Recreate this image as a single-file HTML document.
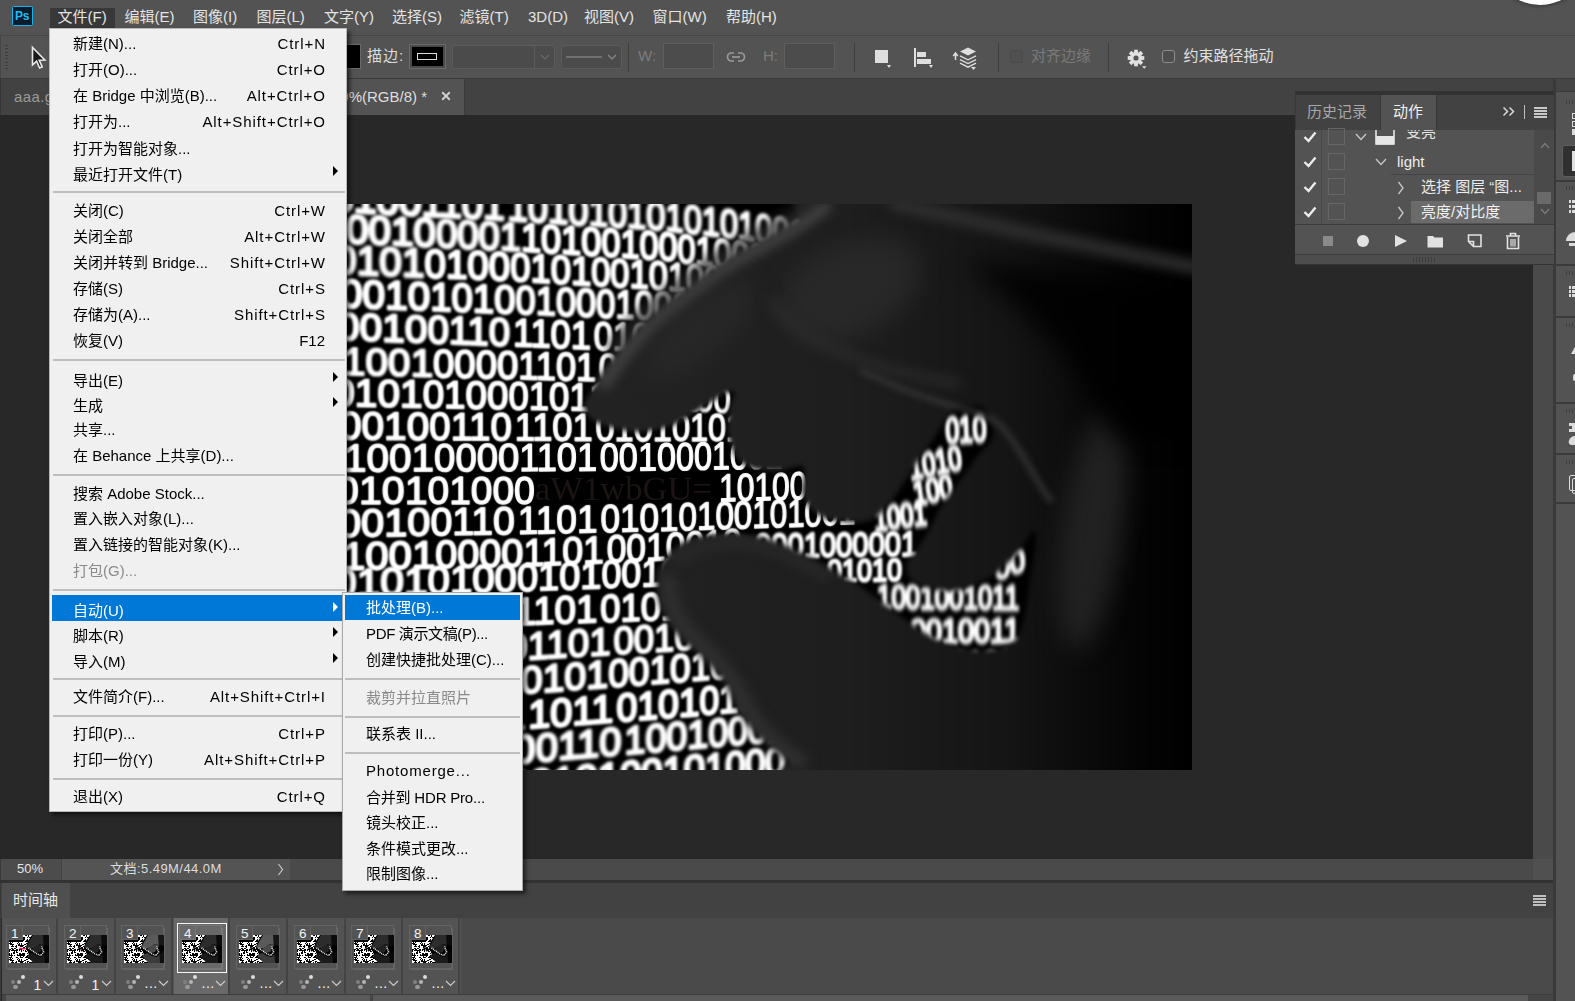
<!DOCTYPE html><html lang="zh-CN"><head><meta charset="utf-8"><title>Photoshop</title><style>
*{box-sizing:border-box;margin:0;padding:0}
html,body{width:1575px;height:1001px;overflow:hidden;background:#282828}
body{position:relative;font-family:"Liberation Sans","Noto Sans CJK SC",sans-serif;font-size:15px;color:#e2e2e2;-webkit-font-smoothing:antialiased}
.a{position:absolute}
.t{position:absolute;white-space:nowrap;line-height:20px;height:20px}
.mi{position:absolute;white-space:nowrap;line-height:22px;height:22px;font-size:15px;color:#000}
.sc{text-align:right}
.sep{position:absolute;height:2px;background:#bebebe;margin-top:-0.5px}
.arr{position:absolute;width:0;height:0;border-top:5px solid transparent;border-bottom:5px solid transparent;border-left:5px solid #000}
svg{position:absolute;overflow:visible}
</style></head><body>
<div class="a" style="left:0px;top:0px;width:1575px;height:35px;background:#535353;"></div>
<div class="a" style="left:0px;top:35px;width:1575px;height:1px;background:#464646;"></div>
<div class="a" style="left:0px;top:36px;width:1575px;height:42px;background:#535353;"></div>
<div class="a" style="left:0px;top:78px;width:1575px;height:1px;background:#3a3a3a;"></div>
<div class="a" style="left:0px;top:79px;width:1575px;height:36px;background:#424242;"></div>
<div class="a" style="left:0px;top:115px;width:1533px;height:744px;background:#282828;"></div>
<div class="a" style="left:12px;top:6px;width:21px;height:20px;background:#0a1c2b;border:1.5px solid #14b4f0;border-radius:1.5px"></div>
<div class="t" style="left:15px;top:6px;font-size:12px;font-weight:bold;color:#1fbdf8;letter-spacing:-0.3px">Ps</div>
<div class="a" style="left:50px;top:8px;width:65px;height:19.5px;background:#383838;border-radius:1px"></div>
<div class="t mbi" style="left:57.5px;top:7px;font-size:15px;color:#e4e4e4">文件(F)</div>
<div class="t mbi" style="left:124.5px;top:7px;font-size:15px;color:#e4e4e4">编辑(E)</div>
<div class="t mbi" style="left:193px;top:7px;font-size:15px;color:#e4e4e4">图像(I)</div>
<div class="t mbi" style="left:256.5px;top:7px;font-size:15px;color:#e4e4e4">图层(L)</div>
<div class="t mbi" style="left:324px;top:7px;font-size:15px;color:#e4e4e4">文字(Y)</div>
<div class="t mbi" style="left:392px;top:7px;font-size:15px;color:#e4e4e4">选择(S)</div>
<div class="t mbi" style="left:459.5px;top:7px;font-size:15px;color:#e4e4e4">滤镜(T)</div>
<div class="t mbi" style="left:528px;top:7px;font-size:15px;color:#e4e4e4">3D(D)</div>
<div class="t mbi" style="left:584px;top:7px;font-size:15px;color:#e4e4e4">视图(V)</div>
<div class="t mbi" style="left:652.5px;top:7px;font-size:15px;color:#e4e4e4">窗口(W)</div>
<div class="t mbi" style="left:726px;top:7px;font-size:15px;color:#e4e4e4">帮助(H)</div>
<div class="a" style="left:1491.5px;top:-91.8px;width:96.6px;height:96.6px;border-radius:50%;background:#fff;box-shadow:0 1px 4px rgba(0,0,0,0.35)"></div>
<div class="a" style="left:0px;top:36px;width:1px;height:42px;background:#454545;"></div>
<div class="a" style="left:5px;top:45.0px;width:3px;height:1px;background:#3d3d3d;"></div>
<div class="a" style="left:5px;top:48.35px;width:3px;height:1px;background:#3d3d3d;"></div>
<div class="a" style="left:5px;top:51.7px;width:3px;height:1px;background:#3d3d3d;"></div>
<div class="a" style="left:5px;top:55.05px;width:3px;height:1px;background:#3d3d3d;"></div>
<div class="a" style="left:5px;top:58.4px;width:3px;height:1px;background:#3d3d3d;"></div>
<div class="a" style="left:5px;top:61.75px;width:3px;height:1px;background:#3d3d3d;"></div>
<div class="a" style="left:5px;top:65.1px;width:3px;height:1px;background:#3d3d3d;"></div>
<div class="a" style="left:5px;top:68.45px;width:3px;height:1px;background:#3d3d3d;"></div>
<svg style="left:28px;top:46px" width="20" height="24" viewBox="0 0 20 24"><path d="M4.5 1.5 L4.5 19 L8.6 15.2 L11.6 22 L14.2 20.8 L11.2 14.2 L16.8 14 Z" fill="#1a1a1a" stroke="#e8e8e8" stroke-width="1.6" stroke-linejoin="miter"/></svg>
<div class="a" style="left:335px;top:44px;width:26px;height:25px;background:#000;border:1px solid #6a6a6a"></div>
<div class="t" style="left:367px;top:46px;font-size:15px;color:#dcdcdc;letter-spacing:1px">描边:</div>
<div class="a" style="left:409px;top:44px;width:37px;height:25px;background:#4a4a4a;border:1px solid #6a6a6a"></div>
<div class="a" style="left:412px;top:47px;width:31px;height:19px;background:#000;"></div>
<div class="a" style="left:417px;top:53px;width:20px;height:7px;background:#000;border:1.5px solid #dcdcdc"></div>
<div class="a" style="left:452px;top:45px;width:103px;height:24px;background:#4b4b4b;border:1px solid #5c5c5c;border-radius:3px"></div>
<div class="a" style="left:534px;top:46px;width:1px;height:22px;background:#5c5c5c;"></div>
<svg style="left:540px;top:54px" width="10" height="6"><path d="M1 1 L5 5 L9 1" fill="none" stroke="#6a6a6a" stroke-width="1.2"/></svg>
<div class="a" style="left:561px;top:45px;width:61px;height:24px;background:#4b4b4b;border:1px solid #5c5c5c;border-radius:3px"></div>
<div class="a" style="left:566px;top:55.5px;width:36px;height:2px;background:#707070;"></div>
<svg style="left:607px;top:54px" width="10" height="6"><path d="M1 1 L5 5 L9 1" fill="none" stroke="#8a8a8a" stroke-width="1.2"/></svg>
<div class="a" style="left:628px;top:43px;width:1px;height:29px;background:#3f3f3f;"></div>
<div class="t" style="left:638px;top:46px;font-size:15px;color:#7c7c7c;">W:</div>
<div class="a" style="left:663px;top:43px;width:51px;height:26px;background:#4c4c4c;border:1px solid #5e5e5e"></div>
<svg style="left:726px;top:50px" width="20" height="14" viewBox="0 0 20 14"><g fill="none" stroke="#9a9a9a" stroke-width="1.7"><path d="M8 3 H5.5 a4 4 0 0 0 0 8 H8"/><path d="M12 3 H14.5 a4 4 0 0 1 0 8 H12"/><path d="M6 7 H14"/></g></svg>
<div class="t" style="left:763px;top:46px;font-size:15px;color:#7c7c7c;">H:</div>
<div class="a" style="left:784px;top:43px;width:51px;height:26px;background:#4c4c4c;border:1px solid #5e5e5e"></div>
<div class="a" style="left:854px;top:43px;width:1px;height:29px;background:#3f3f3f;"></div>
<div class="a" style="left:875px;top:50px;width:13px;height:13px;background:#dedede;"></div>
<div class="a" style="left:887px;top:65px;border-left:2.5px solid transparent;border-right:2.5px solid transparent;border-top:3px solid #dedede"></div>
<div class="a" style="left:913.5px;top:48px;width:2px;height:19px;background:#dedede;"></div>
<div class="a" style="left:917px;top:52px;width:9px;height:5px;background:#dedede;"></div>
<div class="a" style="left:917px;top:59px;width:14px;height:5px;background:#dedede;"></div>
<div class="a" style="left:929px;top:65px;border-left:2.5px solid transparent;border-right:2.5px solid transparent;border-top:3px solid #dedede"></div>
<svg style="left:952px;top:46px" width="26" height="24" viewBox="0 0 26 24"><path d="M3.5 14 V8 M1.2 10 L3.5 7 L5.8 10" fill="none" stroke="#dedede" stroke-width="1.5"/><path d="M16 1.5 L24 5.5 L16 9.5 L8 5.5 Z" fill="#dedede"/><path d="M8 9.8 L16 13.8 L24 9.8 M8 13.6 L16 17.6 L24 13.6 M8 17.2 L16 21.2 L24 17.2" fill="none" stroke="#dedede" stroke-width="1.3"/><path d="M19 21 h5 l-2.5 3z" fill="#dedede"/></svg>
<div class="a" style="left:998px;top:43px;width:1px;height:29px;background:#3f3f3f;"></div>
<div class="a" style="left:1010px;top:50px;width:13px;height:13px;border:1px solid #4a4a4a;border-radius:3px;background:#505050"></div>
<div class="t" style="left:1031px;top:46px;font-size:15px;color:#7a7a7a;">对齐边缘</div>
<div class="a" style="left:1108px;top:43px;width:1px;height:29px;background:#3f3f3f;"></div>
<svg style="left:1126px;top:48px" width="20" height="20" viewBox="-10 -10 20 20"><g fill="#e0e0e0"><rect x="-1.9" y="-8.3" width="3.8" height="4" transform="rotate(0)"/><rect x="-1.9" y="-8.3" width="3.8" height="4" transform="rotate(45)"/><rect x="-1.9" y="-8.3" width="3.8" height="4" transform="rotate(90)"/><rect x="-1.9" y="-8.3" width="3.8" height="4" transform="rotate(135)"/><rect x="-1.9" y="-8.3" width="3.8" height="4" transform="rotate(180)"/><rect x="-1.9" y="-8.3" width="3.8" height="4" transform="rotate(225)"/><rect x="-1.9" y="-8.3" width="3.8" height="4" transform="rotate(270)"/><rect x="-1.9" y="-8.3" width="3.8" height="4" transform="rotate(315)"/><circle r="6"/></g><circle r="2.6" fill="#535353"/><path d="M6 8.2 h4.5 l-2.25 2.6z" fill="#e0e0e0"/></svg>
<div class="a" style="left:1162px;top:50px;width:13px;height:13px;border:1px solid #8c8c8c;border-radius:3px;background:#4d4d4d"></div>
<div class="t" style="left:1183.5px;top:46px;font-size:15px;color:#e0e0e0;">约束路径拖动</div>
<div class="a" style="left:0px;top:79px;width:1px;height:36px;background:#353535;"></div>
<div class="t" style="left:14px;top:87px;font-size:15px;color:#9a9a9a;letter-spacing:0.4px">aaa.gif</div>
<div class="a" style="left:52px;top:79px;width:413px;height:36px;background:#535353;"></div>
<div class="a" style="left:464px;top:79px;width:1px;height:36px;background:#3c3c3c;"></div>
<div class="t" style="left:127px;top:87px;font-size:15px;color:#dedede;text-align:right;width:300px;">123.gif @ 50%(RGB/8) *</div>
<svg style="left:441px;top:91px" width="10" height="10"><path d="M1.2 1.2 L8.8 8.8 M8.8 1.2 L1.2 8.8" stroke="#cfcfcf" stroke-width="2"/></svg>
<svg style="left:340px;top:204px;overflow:hidden" width="852" height="566" viewBox="340 204 852 566" font-family="Liberation Sans, sans-serif">
<defs>
<filter id="b0" color-interpolation-filters="sRGB" x="-5%" y="-30%" width="110%" height="160%"><feGaussianBlur stdDeviation="0.5"/></filter>
<filter id="b1" color-interpolation-filters="sRGB" x="-5%" y="-30%" width="110%" height="160%"><feGaussianBlur stdDeviation="0.9"/></filter>
<filter id="b2" color-interpolation-filters="sRGB" x="-5%" y="-30%" width="110%" height="160%"><feGaussianBlur stdDeviation="1.3"/></filter>
<filter id="b3" color-interpolation-filters="sRGB" x="-5%" y="-30%" width="110%" height="160%"><feGaussianBlur stdDeviation="1.9"/></filter>
<filter id="f4" color-interpolation-filters="sRGB" x="-5%" y="-5%" width="110%" height="110%"><feConvolveMatrix order="5" kernelMatrix="0.0000 0.0000 0.0000 0.0000 0.0000 0.0000 0.0016 0.0371 0.0016 0.0000 0.0000 0.0371 0.8450 0.0371 0.0000 0.0000 0.0016 0.0371 0.0016 0.0000 0.0000 0.0000 0.0000 0.0000 0.0000" divisor="1" edgeMode="none" preserveAlpha="false"/></filter>
<filter id="f5" color-interpolation-filters="sRGB" x="-5%" y="-5%" width="110%" height="110%"><feConvolveMatrix order="5" kernelMatrix="0.0000 0.0000 0.0002 0.0000 0.0000 0.0000 0.0113 0.0837 0.0113 0.0000 0.0002 0.0837 0.6187 0.0837 0.0002 0.0000 0.0113 0.0837 0.0113 0.0000 0.0000 0.0000 0.0002 0.0000 0.0000" divisor="1" edgeMode="none" preserveAlpha="false"/></filter>
<filter id="f6" color-interpolation-filters="sRGB" x="-5%" y="-5%" width="110%" height="110%"><feConvolveMatrix order="5" kernelMatrix="0.0000 0.0004 0.0017 0.0004 0.0000 0.0004 0.0274 0.1099 0.0274 0.0004 0.0017 0.1099 0.4407 0.1099 0.0017 0.0004 0.0274 0.1099 0.0274 0.0004 0.0000 0.0004 0.0017 0.0004 0.0000" divisor="1" edgeMode="none" preserveAlpha="false"/></filter>
<filter id="f7" color-interpolation-filters="sRGB" x="-5%" y="-5%" width="110%" height="110%"><feConvolveMatrix order="5" kernelMatrix="0.0001 0.0020 0.0055 0.0020 0.0001 0.0020 0.0422 0.1171 0.0422 0.0020 0.0055 0.1171 0.3248 0.1171 0.0055 0.0020 0.0422 0.1171 0.0422 0.0020 0.0001 0.0020 0.0055 0.0020 0.0001" divisor="1" edgeMode="none" preserveAlpha="false"/></filter>
<filter id="f8" color-interpolation-filters="sRGB" x="-5%" y="-5%" width="110%" height="110%"><feConvolveMatrix order="5" kernelMatrix="0.0005 0.0050 0.0109 0.0050 0.0005 0.0050 0.0522 0.1141 0.0522 0.0050 0.0109 0.1141 0.2491 0.1141 0.0109 0.0050 0.0522 0.1141 0.0522 0.0050 0.0005 0.0050 0.0109 0.0050 0.0005" divisor="1" edgeMode="none" preserveAlpha="false"/></filter>
<filter id="f9" color-interpolation-filters="sRGB" x="-5%" y="-5%" width="110%" height="110%"><feConvolveMatrix order="5" kernelMatrix="0.0014 0.0090 0.0168 0.0090 0.0014 0.0090 0.0576 0.1067 0.0576 0.0090 0.0168 0.1067 0.1979 0.1067 0.0168 0.0090 0.0576 0.1067 0.0576 0.0090 0.0014 0.0090 0.0168 0.0090 0.0014" divisor="1" edgeMode="none" preserveAlpha="false"/></filter>
<filter id="f10" color-interpolation-filters="sRGB" x="-5%" y="-5%" width="110%" height="110%"><feGaussianBlur stdDeviation="1.0"/></filter>
<filter id="f11" color-interpolation-filters="sRGB" x="-5%" y="-5%" width="110%" height="110%"><feGaussianBlur stdDeviation="1.1"/></filter>
<filter id="f12" color-interpolation-filters="sRGB" x="-5%" y="-5%" width="110%" height="110%"><feGaussianBlur stdDeviation="1.2"/></filter>
<filter id="f13" color-interpolation-filters="sRGB" x="-5%" y="-5%" width="110%" height="110%"><feGaussianBlur stdDeviation="1.3"/></filter>
<filter id="f14" color-interpolation-filters="sRGB" x="-5%" y="-5%" width="110%" height="110%"><feGaussianBlur stdDeviation="1.4"/></filter>
<filter id="f15" color-interpolation-filters="sRGB" x="-5%" y="-5%" width="110%" height="110%"><feGaussianBlur stdDeviation="1.5"/></filter>
<filter id="f16" color-interpolation-filters="sRGB" x="-5%" y="-5%" width="110%" height="110%"><feGaussianBlur stdDeviation="1.6"/></filter>
<filter id="f17" color-interpolation-filters="sRGB" x="-5%" y="-5%" width="110%" height="110%"><feGaussianBlur stdDeviation="1.7"/></filter>
<filter id="f19" color-interpolation-filters="sRGB" x="-5%" y="-5%" width="110%" height="110%"><feGaussianBlur stdDeviation="1.9"/></filter>
<filter id="hb" color-interpolation-filters="sRGB" x="-5%" y="-5%" width="110%" height="110%"><feGaussianBlur stdDeviation="2.6"/></filter>
<filter id="hb2" color-interpolation-filters="sRGB" x="-20%" y="-20%" width="140%" height="140%"><feGaussianBlur stdDeviation="6"/></filter>
<filter id="hb4" color-interpolation-filters="sRGB" x="-30%" y="-30%" width="160%" height="160%"><feGaussianBlur stdDeviation="12"/></filter>
<filter id="hb3" color-interpolation-filters="sRGB" x="-20%" y="-20%" width="140%" height="140%"><feGaussianBlur stdDeviation="3"/></filter>
<linearGradient id="hg" gradientUnits="userSpaceOnUse" x1="560" y1="0" x2="1192" y2="0"><stop offset="0" stop-color="#232323"/><stop offset="0.45" stop-color="#1e1e1e"/><stop offset="0.72" stop-color="#141414"/><stop offset="0.9" stop-color="#050505"/><stop offset="1" stop-color="#000"/></linearGradient>
<pattern id="spk" width="24" height="16" patternUnits="userSpaceOnUse"><rect width="24" height="16" fill="#fff"/><rect x="10" y="4" width="2" height="1" fill="#000"/><rect x="2" y="3" width="1" height="1" fill="#000"/><rect x="16" y="6" width="1" height="1" fill="#000"/><rect x="13" y="13" width="1" height="1" fill="#000"/><rect x="2" y="13" width="1" height="1" fill="#000"/><rect x="7" y="1" width="2" height="1" fill="#000"/><rect x="7" y="1" width="1" height="1" fill="#000"/><rect x="13" y="4" width="1" height="1" fill="#000"/><rect x="17" y="5" width="1" height="1" fill="#000"/><rect x="11" y="3" width="1" height="1" fill="#000"/><rect x="19" y="6" width="2" height="2" fill="#000"/><rect x="10" y="14" width="2" height="1" fill="#000"/><rect x="9" y="7" width="1" height="1" fill="#000"/><rect x="2" y="9" width="2" height="1" fill="#000"/><rect x="23" y="14" width="1" height="1" fill="#000"/><rect x="3" y="13" width="1" height="1" fill="#000"/><rect x="4" y="15" width="2" height="1" fill="#000"/><rect x="21" y="2" width="1" height="1" fill="#000"/><rect x="22" y="11" width="2" height="2" fill="#000"/><rect x="2" y="2" width="1" height="2" fill="#000"/><rect x="22" y="2" width="1" height="1" fill="#000"/><rect x="20" y="14" width="1" height="2" fill="#000"/><rect x="21" y="11" width="1" height="2" fill="#000"/><rect x="11" y="5" width="1" height="2" fill="#000"/><rect x="1" y="6" width="1" height="1" fill="#000"/><rect x="23" y="7" width="2" height="2" fill="#000"/><rect x="15" y="2" width="1" height="2" fill="#000"/><rect x="12" y="8" width="1" height="2" fill="#000"/><rect x="17" y="8" width="2" height="1" fill="#000"/><rect x="21" y="12" width="1" height="1" fill="#000"/><rect x="2" y="5" width="1" height="1" fill="#000"/><rect x="21" y="7" width="1" height="2" fill="#000"/><rect x="18" y="5" width="1" height="1" fill="#000"/><rect x="0" y="4" width="2" height="1" fill="#000"/><rect x="19" y="10" width="1" height="1" fill="#000"/><rect x="14" y="12" width="2" height="2" fill="#000"/><rect x="12" y="3" width="2" height="2" fill="#000"/><rect x="1" y="6" width="1" height="1" fill="#000"/><rect x="14" y="5" width="1" height="1" fill="#000"/><rect x="19" y="1" width="1" height="1" fill="#000"/><rect x="18" y="4" width="1" height="1" fill="#000"/><rect x="19" y="0" width="1" height="1" fill="#000"/><rect x="19" y="12" width="1" height="1" fill="#000"/><rect x="11" y="11" width="2" height="1" fill="#000"/><rect x="3" y="15" width="2" height="2" fill="#000"/><rect x="15" y="9" width="1" height="1" fill="#000"/><rect x="3" y="10" width="1" height="2" fill="#000"/><rect x="22" y="5" width="1" height="1" fill="#000"/><rect x="16" y="11" width="1" height="1" fill="#000"/><rect x="16" y="9" width="1" height="1" fill="#000"/><rect x="16" y="11" width="1" height="1" fill="#000"/><rect x="7" y="10" width="1" height="1" fill="#000"/><rect x="7" y="12" width="1" height="1" fill="#000"/><rect x="16" y="15" width="1" height="1" fill="#000"/><rect x="0" y="8" width="2" height="1" fill="#000"/><rect x="6" y="11" width="2" height="1" fill="#000"/><rect x="11" y="2" width="1" height="1" fill="#000"/><rect x="7" y="15" width="1" height="1" fill="#000"/><rect x="6" y="15" width="1" height="2" fill="#000"/><rect x="20" y="11" width="1" height="1" fill="#000"/><rect x="12" y="6" width="2" height="1" fill="#000"/><rect x="13" y="10" width="1" height="2" fill="#000"/><rect x="14" y="12" width="1" height="1" fill="#000"/><rect x="5" y="4" width="1" height="1" fill="#000"/><rect x="18" y="14" width="1" height="2" fill="#000"/><rect x="21" y="11" width="1" height="1" fill="#000"/><rect x="0" y="0" width="1" height="1" fill="#000"/><rect x="13" y="6" width="1" height="1" fill="#000"/><rect x="8" y="6" width="1" height="1" fill="#000"/><rect x="18" y="10" width="1" height="2" fill="#000"/><rect x="4" y="1" width="1" height="2" fill="#000"/><rect x="21" y="13" width="1" height="1" fill="#000"/><rect x="16" y="0" width="2" height="1" fill="#000"/><rect x="19" y="0" width="1" height="1" fill="#000"/><rect x="4" y="15" width="1" height="1" fill="#000"/><rect x="10" y="15" width="1" height="1" fill="#000"/><rect x="7" y="6" width="1" height="1" fill="#000"/><rect x="3" y="14" width="1" height="1" fill="#000"/><rect x="14" y="10" width="1" height="1" fill="#000"/><rect x="14" y="15" width="1" height="1" fill="#000"/><rect x="17" y="6" width="2" height="1" fill="#000"/><rect x="13" y="3" width="2" height="2" fill="#000"/><rect x="10" y="2" width="1" height="2" fill="#000"/><rect x="2" y="6" width="1" height="1" fill="#000"/><rect x="4" y="11" width="1" height="1" fill="#000"/><rect x="4" y="14" width="1" height="1" fill="#000"/><rect x="12" y="15" width="1" height="1" fill="#000"/><rect x="5" y="13" width="2" height="1" fill="#000"/><rect x="13" y="6" width="1" height="1" fill="#000"/><rect x="2" y="11" width="1" height="1" fill="#000"/><rect x="17" y="14" width="2" height="1" fill="#000"/><rect x="12" y="10" width="1" height="1" fill="#000"/><rect x="3" y="7" width="1" height="1" fill="#000"/><rect x="8" y="8" width="1" height="1" fill="#000"/><rect x="8" y="4" width="2" height="1" fill="#000"/><rect x="12" y="4" width="2" height="1" fill="#000"/><rect x="2" y="8" width="1" height="1" fill="#000"/><rect x="13" y="2" width="1" height="1" fill="#000"/><rect x="20" y="2" width="1" height="1" fill="#000"/><rect x="19" y="7" width="1" height="1" fill="#000"/><rect x="3" y="14" width="1" height="1" fill="#000"/><rect x="17" y="13" width="1" height="1" fill="#000"/><rect x="1" y="7" width="1" height="1" fill="#000"/><rect x="8" y="1" width="1" height="1" fill="#000"/><rect x="9" y="9" width="1" height="1" fill="#000"/><rect x="14" y="5" width="1" height="1" fill="#000"/><rect x="0" y="8" width="1" height="1" fill="#000"/><rect x="0" y="6" width="2" height="1" fill="#000"/><rect x="14" y="3" width="2" height="2" fill="#000"/><rect x="17" y="12" width="1" height="1" fill="#000"/><rect x="7" y="10" width="1" height="1" fill="#000"/><rect x="12" y="11" width="1" height="1" fill="#000"/><rect x="0" y="2" width="1" height="2" fill="#000"/><rect x="5" y="1" width="1" height="2" fill="#000"/><rect x="16" y="9" width="1" height="1" fill="#000"/><rect x="1" y="14" width="1" height="1" fill="#000"/><rect x="8" y="14" width="1" height="1" fill="#000"/><rect x="11" y="10" width="1" height="1" fill="#000"/><rect x="1" y="9" width="1" height="1" fill="#000"/><rect x="5" y="0" width="1" height="2" fill="#000"/><rect x="2" y="15" width="1" height="1" fill="#000"/><rect x="7" y="0" width="1" height="1" fill="#000"/><rect x="2" y="4" width="2" height="1" fill="#000"/><rect x="12" y="0" width="1" height="1" fill="#000"/><rect x="20" y="7" width="1" height="1" fill="#000"/><rect x="21" y="12" width="1" height="2" fill="#000"/><rect x="4" y="9" width="1" height="1" fill="#000"/><rect x="22" y="13" width="1" height="1" fill="#000"/><rect x="21" y="7" width="1" height="1" fill="#000"/><rect x="1" y="4" width="1" height="1" fill="#000"/><rect x="12" y="14" width="1" height="1" fill="#000"/><rect x="20" y="7" width="2" height="1" fill="#000"/><rect x="0" y="14" width="1" height="1" fill="#000"/><rect x="21" y="2" width="2" height="1" fill="#000"/><rect x="2" y="8" width="1" height="1" fill="#000"/><rect x="7" y="14" width="2" height="2" fill="#000"/><rect x="2" y="15" width="1" height="1" fill="#000"/><rect x="19" y="6" width="1" height="1" fill="#000"/><rect x="10" y="8" width="1" height="1" fill="#000"/><rect x="0" y="15" width="1" height="2" fill="#000"/><rect x="8" y="3" width="1" height="2" fill="#000"/><rect x="9" y="9" width="2" height="2" fill="#000"/><rect x="14" y="3" width="1" height="1" fill="#000"/><rect x="2" y="15" width="1" height="1" fill="#000"/><rect x="14" y="2" width="2" height="1" fill="#000"/><rect x="12" y="6" width="1" height="1" fill="#000"/><rect x="18" y="2" width="1" height="1" fill="#000"/><rect x="11" y="4" width="1" height="1" fill="#000"/><rect x="22" y="11" width="1" height="2" fill="#000"/><rect x="15" y="12" width="1" height="1" fill="#000"/></pattern>
</defs>
<rect x="340" y="204" width="852" height="566" fill="#000"/>
<g filter="url(#f4)" fill="#fff" stroke="#fff" stroke-width="1.3" stroke-linejoin="round">
<text font-size="39" transform="matrix(0.929 -0.0034 0 1 519.2 471.0)">1101</text>
<text font-size="39" transform="matrix(0.878 -0.0032 0 1 599.8 470.7)">0010</text>
<text font-size="39" transform="matrix(0.831 -0.0156 0 1 676.0 470.2)">0010</text>
<text font-size="39" transform="matrix(0.796 -0.0149 0 1 748.1 468.8)">01</text>
<text font-size="39" transform="matrix(0.963 0.0000 0 1 514.1 504.0)">0</text>
<text font-size="39" transform="matrix(0.815 -0.0185 0 1 719.0 501.4)">1010</text>
<text font-size="39" transform="matrix(0.781 -0.0234 0 1 789.7 499.6)">01</text>
</g>
<g filter="url(#f5)" fill="#fff" stroke="#fff" stroke-width="1.45" stroke-linejoin="round">
<text font-size="39" transform="matrix(0.982 -0.0025 0 1 434.1 471.2)">0000</text>
<text font-size="39" transform="matrix(0.998 0.0000 0 1 427.5 504.0)">0100</text>
<text font-size="39" transform="matrix(0.952 -0.0209 0 1 517.8 534.1)">1101</text>
<text font-size="39" transform="matrix(0.900 -0.0197 0 1 600.4 532.3)">0101</text>
<text font-size="39" transform="matrix(0.851 -0.0270 0 1 678.5 530.4)">0100</text>
<text font-size="39" transform="matrix(0.804 -0.0255 0 1 752.3 528.1)">1010</text>
<text font-size="39" transform="matrix(0.770 -0.0412 0 1 822.1 525.4)">01</text>
</g>
<g filter="url(#f6)" fill="#fff" stroke="#fff" stroke-width="1.6" stroke-linejoin="round">
<text font-size="39" transform="matrix(0.931 0.0040 0 1 514.7 440.4)">1101</text>
<text font-size="39" transform="matrix(0.881 0.0038 0 1 595.5 440.8)">0101</text>
<text font-size="39" transform="matrix(0.833 0.0000 0 1 671.9 441.0)">0101</text>
<text font-size="39" transform="matrix(0.804 0.0000 0 1 744.1 441.0)">0</text>
<text font-size="39" transform="matrix(1.038 -0.0027 0 1 344.0 471.5)">1001</text>
<text font-size="39" transform="matrix(1.055 0.0000 0 1 336.0 504.0)">0101</text>
<text font-size="39" transform="matrix(1.007 -0.0157 0 1 430.4 535.4)">0110</text>
<text font-size="39" transform="matrix(0.907 -0.0397 0 1 606.7 562.8)">0010</text>
<text font-size="39" transform="matrix(0.863 -0.0503 0 1 685.4 559.0)">010</text>
</g>
<g filter="url(#f7)" fill="#fff" stroke="#fff" stroke-width="1.75" stroke-linejoin="round">
<text font-size="39" transform="matrix(0.935 0.0164 0 1 508.4 409.2)">0101</text>
<text font-size="39" transform="matrix(0.884 0.0032 0 1 589.5 410.5)">1001</text>
<text font-size="39" transform="matrix(0.848 0.0030 0 1 666.3 410.8)">00</text>
<text font-size="39" transform="matrix(0.984 0.0076 0 1 429.3 439.8)">0110</text>
<text font-size="39" transform="matrix(0.960 -0.0421 0 1 523.4 566.5)">1101</text>
<text font-size="39" transform="matrix(0.920 -0.0336 0 1 601.4 588.1)">0010</text>
<text font-size="39" transform="matrix(0.875 -0.0437 0 1 681.2 584.9)">101</text>
</g>
<g filter="url(#f8)" fill="#fff" stroke="#fff" stroke-width="1.9" stroke-linejoin="round">
<text font-size="39.5" transform="matrix(0.917 0.0274 0 1 518.3 378.9)">1101</text>
<text font-size="39.5" transform="matrix(0.867 0.0158 0 1 598.8 381.2)">0010</text>
<text font-size="39.5" transform="matrix(0.832 0.0151 0 1 675.1 382.5)">01</text>
<text font-size="39" transform="matrix(0.988 0.0179 0 1 422.7 407.7)">0100</text>
<text font-size="39" transform="matrix(1.040 0.0081 0 1 339.0 439.1)">0010</text>
<text font-size="39" transform="matrix(1.065 -0.0166 0 1 338.0 536.9)">0010</text>
<text font-size="39" transform="matrix(1.016 -0.0184 0 1 435.2 568.1)">0000</text>
<text font-size="39" transform="matrix(0.973 -0.0355 0 1 517.0 591.2)">0101</text>
</g>
<g filter="url(#f9)" fill="#fff" stroke="#fff" stroke-width="2.05" stroke-linejoin="round">
<text font-size="39.5" transform="matrix(0.920 0.0380 0 1 512.9 346.1)">1101</text>
<text font-size="39.5" transform="matrix(0.871 0.0272 0 1 593.8 349.4)">0100</text>
<text font-size="39.5" transform="matrix(0.829 0.0259 0 1 670.3 352.1)">101</text>
<text font-size="39.5" transform="matrix(0.969 0.0226 0 1 433.1 376.9)">0000</text>
<text font-size="39" transform="matrix(1.045 0.0189 0 1 332.0 406.0)">0101</text>
<text font-size="39" transform="matrix(1.075 -0.0195 0 1 342.0 569.8)">1001</text>
<text font-size="39" transform="matrix(1.030 -0.0320 0 1 427.6 594.0)">0100</text>
<text font-size="39" transform="matrix(0.987 -0.0360 0 1 514.6 625.3)">1101</text>
<text font-size="39" transform="matrix(0.933 -0.0340 0 1 600.3 622.2)">0101</text>
<text font-size="39" transform="matrix(0.881 -0.0441 0 1 681.2 618.9)">0100</text>
</g>
<g filter="url(#f10)" fill="#fff" stroke="#fff" stroke-width="2.2" stroke-linejoin="round">
<text font-size="40" transform="matrix(0.812 0.0406 0 1 672.7 320.6)">0100</text>
<text font-size="39.5" transform="matrix(1.025 0.0239 0 1 343.0 374.8)">1001</text>
<text font-size="39" transform="matrix(1.090 -0.0339 0 1 333.0 596.9)">0101</text>
<text font-size="39" transform="matrix(1.045 -0.0379 0 1 424.0 628.6)">0110</text>
<text font-size="39" transform="matrix(0.992 -0.0615 0 1 527.5 659.7)">1101</text>
<text font-size="39" transform="matrix(0.936 -0.0581 0 1 613.5 654.4)">0010</text>
<text font-size="39" transform="matrix(0.883 -0.0663 0 1 694.7 648.9)">0100</text>
</g>
<g filter="url(#f11)" fill="#fff" stroke="#fff" stroke-width="2.35" stroke-linejoin="round">
<text font-size="40" transform="matrix(0.776 0.0660 0 1 740.4 296.3)">001</text>
<text font-size="40" transform="matrix(0.907 0.0397 0 1 515.6 313.7)">0100</text>
<text font-size="40" transform="matrix(0.858 0.0376 0 1 596.3 317.2)">0100</text>
<text font-size="39.5" transform="matrix(0.973 0.0353 0 1 427.4 343.0)">0110</text>
<text font-size="39" transform="matrix(1.106 -0.0401 0 1 328.0 632.1)">1010</text>
<text font-size="39" transform="matrix(1.050 -0.0435 0 1 436.4 663.6)">1000</text>
<text font-size="39.5" transform="matrix(0.939 -0.0720 0 1 608.2 687.5)">0010</text>
<text font-size="39.5" transform="matrix(0.886 -0.0720 0 1 690.7 681.0)">1001</text>
</g>
<g filter="url(#f12)" fill="#fff" stroke="#fff" stroke-width="2.5" stroke-linejoin="round">
<text font-size="40" transform="matrix(0.765 0.1052 0 1 749.4 271.0)">0100</text>
<text font-size="40" transform="matrix(0.910 0.0565 0 1 510.2 280.5)">0101</text>
<text font-size="40" transform="matrix(0.861 0.0534 0 1 591.2 285.2)">0010</text>
<text font-size="40" transform="matrix(0.815 0.0692 0 1 667.9 290.2)">1001</text>
<text font-size="40" transform="matrix(0.959 0.0348 0 1 430.2 310.6)">1010</text>
<text font-size="39.5" transform="matrix(1.029 0.0373 0 1 337.0 339.8)">0010</text>
<text font-size="39.5" transform="matrix(0.995 -0.0763 0 1 520.7 694.1)">0101</text>
</g>
<g filter="url(#f13)" fill="#fff" stroke="#fff" stroke-width="2.65" stroke-linejoin="round">
<text font-size="40" transform="matrix(0.740 0.1163 0 1 806.8 248.4)">01</text>
<text font-size="40" transform="matrix(0.904 0.0594 0 1 520.9 250.9)">1010</text>
<text font-size="40" transform="matrix(0.855 0.0562 0 1 601.4 256.1)">0100</text>
<text font-size="40" transform="matrix(0.809 0.0944 0 1 677.5 262.0)">0100</text>
<text font-size="40" transform="matrix(0.962 0.0374 0 1 424.5 277.2)">0100</text>
<text font-size="40" transform="matrix(1.014 0.0368 0 1 340.0 307.4)">0010</text>
<text font-size="39" transform="matrix(1.111 -0.0461 0 1 340.0 667.6)">0100</text>
<text font-size="39.5" transform="matrix(1.054 -0.0491 0 1 428.1 698.4)">0100</text>
<text font-size="39.5" transform="matrix(1.003 -0.0769 0 1 528.2 728.6)">1011</text>
<text font-size="39.5" transform="matrix(0.946 -0.0725 0 1 616.4 721.8)">0101</text>
<text font-size="39.5" transform="matrix(0.893 -0.0759 0 1 699.5 715.1)">0101</text>
</g>
<g filter="url(#f14)" fill="#fff" stroke="#fff" stroke-width="2.8" stroke-linejoin="round">
<text font-size="40" transform="matrix(0.863 0.0567 0 1 588.7 225.3)">1010</text>
<text font-size="40" transform="matrix(0.816 0.0898 0 1 665.5 230.6)">1010</text>
<text font-size="40" transform="matrix(0.772 0.1213 0 1 738.1 238.6)">1001</text>
<text font-size="40" transform="matrix(0.956 0.0446 0 1 435.9 246.9)">0001</text>
<text font-size="40" transform="matrix(1.017 0.0395 0 1 334.0 273.7)">0101</text>
<text font-size="39.5" transform="matrix(1.116 -0.0520 0 1 330.0 703.0)">0101</text>
<text font-size="39.5" transform="matrix(1.062 -0.0550 0 1 434.9 733.6)">1101</text>
<text font-size="39.5" transform="matrix(1.010 -0.0848 0 1 535.7 761.9)">0110</text>
<text font-size="39.5" transform="matrix(0.953 -0.0851 0 1 624.5 754.5)">1001</text>
<text font-size="39.5" transform="matrix(0.899 -0.0803 0 1 708.2 747.2)">0001</text>
<text font-size="39.5" transform="matrix(0.848 -0.0757 0 1 787.2 740.1)">0010</text>
</g>
<g filter="url(#f15)" fill="#fff" stroke="#fff" stroke-width="2.95" stroke-linejoin="round">
<text font-size="40" transform="matrix(0.912 0.0599 0 1 507.5 220.2)">1010</text>
<text font-size="39.5" transform="matrix(0.913 -0.0860 0 1 705.1 781.8)">1000</text>
<text font-size="39.5" transform="matrix(0.861 -0.0810 0 1 785.4 774.2)">1100</text>
</g>
<g filter="url(#f16)" fill="#fff" stroke="#fff" stroke-width="3.1" stroke-linejoin="round">
<text font-size="40" transform="matrix(0.964 0.0500 0 1 421.7 215.8)">1101</text>
<text font-size="40" transform="matrix(1.010 0.0471 0 1 346.0 242.7)">0010</text>
<text font-size="39.5" transform="matrix(1.125 -0.0583 0 1 336.0 738.7)">0100</text>
<text font-size="39.5" transform="matrix(1.070 -0.0610 0 1 441.6 767.6)">0100</text>
<text font-size="39.5" transform="matrix(1.027 -0.0899 0 1 529.8 797.4)">0101</text>
<text font-size="39.5" transform="matrix(0.968 -0.0911 0 1 620.0 789.5)">0010</text>
</g>
<g filter="url(#f17)" fill="#fff" stroke="#fff" stroke-width="3.25" stroke-linejoin="round">
<text font-size="40" transform="matrix(1.019 0.0528 0 1 331.0 211.1)">0100</text>
<text font-size="39.5" transform="matrix(1.134 -0.0646 0 1 342.0 773.3)">0010</text>
<text font-size="39.5" transform="matrix(1.087 -0.0620 0 1 434.2 803.1)">0100</text>
</g>
<g filter="url(#f19)" fill="#fff" stroke="#fff" stroke-width="3.55" stroke-linejoin="round">
<text font-size="39.5" transform="matrix(1.152 -0.0656 0 1 333.0 808.8)">0101</text>
</g>
<text font-size="37" fill="#fff" stroke="#fff" stroke-width="1.6" stroke-linejoin="round" filter="url(#b1)" transform="matrix(0.848 0.059 -0.000 1.000 696 411)">00</text>
<text font-size="36" fill="#fff" stroke="#fff" stroke-width="2.4" stroke-linejoin="round" filter="url(#b2)" transform="matrix(0.810 -0.011 -0.000 1.000 755 558)">0001000001</text>
<text font-size="31" fill="#fff" stroke="#fff" stroke-width="2.6" stroke-linejoin="round" filter="url(#b2)" transform="matrix(0.870 -0.015 -0.000 1.000 827 582)">01010</text>
<text font-size="36" fill="#fff" stroke="#fff" stroke-width="3.2" stroke-linejoin="round" filter="url(#b3)" transform="matrix(0.720 0.004 -0.000 1.000 877 609)">1001001011</text>
<text font-size="36" fill="#fff" stroke="#fff" stroke-width="3.2" stroke-linejoin="round" filter="url(#b3)" transform="matrix(0.800 -0.007 -0.000 1.000 910 643.5)">0010011</text>
<text font-size="36" fill="#fff" stroke="#fff" stroke-width="3.0" stroke-linejoin="round" filter="url(#b3)" transform="matrix(0.800 -0.028 -0.000 1.000 935 678)">10101</text>
<text font-size="34" fill="#fff" stroke="#fff" stroke-width="3.0" stroke-linejoin="round" filter="url(#b3)" transform="matrix(0.799 -0.291 0.105 0.995 996 581)">00</text>
<text font-size="37" fill="#fff" stroke="#fff" stroke-width="3.6" stroke-linejoin="round" filter="url(#b3)" transform="matrix(0.659 -0.035 0.035 0.999 946 443.5)">010</text>
<text font-size="35" fill="#fff" stroke="#fff" stroke-width="3.6" stroke-linejoin="round" filter="url(#b3)" transform="matrix(0.665 -0.141 0.139 0.990 911 480)">1010</text>
<text font-size="35" fill="#fff" stroke="#fff" stroke-width="3.6" stroke-linejoin="round" filter="url(#b3)" transform="matrix(0.665 -0.141 0.139 0.990 915 506)">100</text>
<text font-size="35" fill="#fff" stroke="#fff" stroke-width="3.6" stroke-linejoin="round" filter="url(#b3)" transform="matrix(0.674 -0.089 0.087 0.996 875 531.5)">1001</text>
<text x="535" y="500" font-size="33" font-family="Liberation Serif, serif" fill="#1c1313" textLength="177" lengthAdjust="spacingAndGlyphs">aW1wbGU=</text>
<path d="M832.0 194.0 C764.8 198.0 808.5 212.5 797.0 220.0 C785.5 227.5 774.2 232.8 763.0 239.0 C751.8 245.2 741.8 249.5 730.0 257.0 C718.2 264.5 705.7 273.8 692.0 284.0 C678.3 294.2 661.0 305.8 648.0 318.0 C635.0 330.2 623.0 345.7 614.0 357.0 C605.0 368.3 599.0 378.0 594.0 386.0 C589.0 394.0 585.0 400.2 584.0 405.0 C583.0 409.8 585.3 411.8 588.0 415.0 C590.7 418.2 592.0 421.2 600.0 424.0 C608.0 426.8 623.7 431.8 636.0 432.0 C648.3 432.2 663.0 429.0 674.0 425.0 C685.0 421.0 692.2 413.7 702.0 408.0 C711.8 402.3 728.5 390.7 733.0 391.0 C737.5 391.3 729.8 403.2 729.0 410.0 C728.2 416.8 727.0 424.5 728.0 432.0 C729.0 439.5 731.2 449.0 735.0 455.0 C738.8 461.0 743.5 465.3 751.0 468.0 C758.5 470.7 771.3 471.2 780.0 471.0 C788.7 470.8 799.2 462.8 803.0 467.0 C806.8 471.2 800.2 487.8 803.0 496.0 C805.8 504.2 812.7 511.7 820.0 516.0 C827.3 520.3 838.5 521.3 847.0 522.0 C855.5 522.7 864.2 522.8 871.0 520.0 C877.8 517.2 882.7 511.0 888.0 505.0 C893.3 499.0 898.0 491.3 903.0 484.0 C908.0 476.7 912.7 468.8 918.0 461.0 C923.3 453.2 929.3 445.3 935.0 437.0 C940.7 428.7 946.5 416.3 952.0 411.0 C957.5 405.7 962.3 405.2 968.0 405.0 C973.7 404.8 981.8 404.8 986.0 410.0 C990.2 415.2 994.2 428.7 993.0 436.0 C991.8 443.3 984.3 446.8 979.0 454.0 C973.7 461.2 967.2 470.5 961.0 479.0 C954.8 487.5 947.3 496.5 942.0 505.0 C936.7 513.5 933.3 522.3 929.0 530.0 C924.7 537.7 919.7 545.5 916.0 551.0 C912.3 556.5 908.2 558.7 907.0 563.0 C905.8 567.3 906.5 573.2 909.0 577.0 C911.5 580.8 914.7 583.7 922.0 586.0 C929.3 588.3 942.8 591.8 953.0 591.0 C963.2 590.2 974.5 585.0 983.0 581.0 C991.5 577.0 997.5 572.7 1004.0 567.0 C1010.5 561.3 1017.0 553.2 1022.0 547.0 C1027.0 540.8 1031.8 529.8 1034.0 530.0 C1036.2 530.2 1035.7 539.5 1035.0 548.0 C1034.3 556.5 1031.8 569.3 1030.0 581.0 C1028.2 592.7 1026.8 607.8 1024.0 618.0 C1021.2 628.2 1019.8 636.7 1013.0 642.0 C1006.2 647.3 994.8 650.0 983.0 650.0 C971.2 650.0 955.5 647.5 942.0 642.0 C928.5 636.5 915.5 626.2 902.0 617.0 C888.5 607.8 874.7 596.0 861.0 587.0 C847.3 578.0 833.5 570.2 820.0 563.0 C806.5 555.8 791.3 548.5 780.0 544.0 C768.7 539.5 760.2 537.8 752.0 536.0 C743.8 534.2 741.3 532.5 731.0 533.0 C720.7 533.5 700.8 535.0 690.0 539.0 C679.2 543.0 671.5 551.0 666.0 557.0 C660.5 563.0 658.0 567.2 657.0 575.0 C656.0 582.8 657.0 594.7 660.0 604.0 C663.0 613.3 667.5 622.0 675.0 631.0 C682.5 640.0 696.5 649.5 705.0 658.0 C713.5 666.5 720.5 673.5 726.0 682.0 C731.5 690.5 732.5 700.2 738.0 709.0 C743.5 717.8 750.5 726.7 759.0 735.0 C767.5 743.3 779.7 751.8 789.0 759.0 C798.3 766.2 746.5 774.8 815.0 778.0 C883.5 781.2 1135.8 875.0 1200.0 778.0 C1264.2 681.0 1261.3 293.3 1200.0 196.0 C1138.7 98.7 899.2 190.0 832.0 194.0Z" fill="url(#hg)" filter="url(#hb)"/>
<path d="M822.0 198.0 C816.7 201.3 800.8 211.7 790.0 218.0 C779.2 224.3 768.0 230.0 757.0 236.0 C746.0 242.0 735.7 246.7 724.0 254.0 C712.3 261.3 700.3 270.0 687.0 280.0 C673.7 290.0 656.7 302.0 644.0 314.0 C631.3 326.0 616.5 345.7 611.0 352.0" fill="none" stroke="#242424" stroke-width="15" filter="url(#hb2)" opacity="0.8"/>
<path d="M830.0 204.0 C824.8 207.7 809.7 219.2 799.0 226.0 C788.3 232.8 777.0 238.8 766.0 245.0 C755.0 251.2 744.7 255.5 733.0 263.0 C721.3 270.5 709.3 279.8 696.0 290.0 C682.7 300.2 665.5 312.3 653.0 324.0 C640.5 335.7 629.5 349.3 621.0 360.0 C612.5 370.7 605.2 383.3 602.0 388.0" fill="none" stroke="#505050" stroke-width="10" filter="url(#hb2)" opacity="0.85"/>
<ellipse cx="850" cy="290" rx="75" ry="45" fill="#2b2b2b" opacity="0.8" filter="url(#hb4)" transform="rotate(-25 850 290)"/>
<ellipse cx="1092" cy="530" rx="30" ry="120" fill="#242424" opacity="0.9" filter="url(#hb4)" transform="rotate(8 1092 530)"/>
<ellipse cx="700" cy="330" rx="70" ry="26" fill="#2a2a2a" opacity="0.7" filter="url(#hb4)" transform="rotate(-40 700 330)"/>
<path d="M668.0 575.0 C668.7 579.8 668.7 594.5 672.0 604.0 C675.3 613.5 680.7 622.7 688.0 632.0 C695.3 641.3 707.7 650.3 716.0 660.0 C724.3 669.7 732.0 680.7 738.0 690.0 C744.0 699.3 745.8 707.3 752.0 716.0 C758.2 724.7 766.2 733.8 775.0 742.0 C783.8 750.2 800.0 761.2 805.0 765.0" fill="none" stroke="#303030" stroke-width="14" filter="url(#hb2)"/>
<path d="M672.0 562.0 C676.7 559.7 688.7 551.3 700.0 548.0 C711.3 544.7 726.7 541.3 740.0 542.0 C753.3 542.7 765.0 546.0 780.0 552.0 C795.0 558.0 821.7 573.7 830.0 578.0" fill="none" stroke="#2a2a2a" stroke-width="10" filter="url(#hb2)"/>
<path d="M860.0 370.0 C866.7 373.0 886.7 382.7 900.0 388.0 C913.3 393.3 927.5 398.0 940.0 402.0 C952.5 406.0 965.0 408.2 975.0 412.0 C985.0 415.8 992.2 417.8 1000.0 425.0 C1007.8 432.2 1015.3 445.0 1022.0 455.0 C1028.7 465.0 1035.0 477.2 1040.0 485.0 C1045.0 492.8 1050.0 499.2 1052.0 502.0" fill="none" stroke="#363636" stroke-width="5" filter="url(#hb3)"/>
<path d="M770.0 300.0 C775.0 305.0 788.3 321.3 800.0 330.0 C811.7 338.7 823.3 345.0 840.0 352.0 C856.7 359.0 880.0 366.7 900.0 372.0 C920.0 377.3 950.0 382.0 960.0 384.0" fill="none" stroke="#2c2c2c" stroke-width="8" filter="url(#hb2)"/>
<path d="M965 262 L1060 270 L1200 288 L1200 440 L1115 440 L1062 352 L1002 292 Z" fill="#000" opacity="0.85" filter="url(#hb4)"/>
<path d="M890.0 203.0 C901.7 205.5 938.0 213.2 960.0 218.0 C982.0 222.8 998.7 227.0 1022.0 232.0 C1045.3 237.0 1070.3 242.0 1100.0 248.0 C1129.7 254.0 1183.3 264.7 1200.0 268.0" fill="none" stroke="#303030" stroke-width="13" filter="url(#hb2)"/>
</svg>
<div class="a" style="left:1533px;top:115px;width:20px;height:744px;background:#4a4a4a;"></div>
<div class="a" style="left:1553px;top:79px;width:3px;height:922px;background:#3a3a3a;"></div>
<div class="a" style="left:1556px;top:79px;width:19px;height:922px;background:#535353;"></div>
<div class="a" style="left:1556px;top:79px;width:19px;height:12px;background:#454545;"></div>
<div class="a" style="left:1556px;top:91px;width:19px;height:1px;background:#3a3a3a;"></div>
<div class="a" style="left:1566px;top:100px;width:1px;height:4px;background:#3e3e3e;"></div>
<div class="a" style="left:1569px;top:100px;width:1px;height:4px;background:#3e3e3e;"></div>
<div class="a" style="left:1572px;top:100px;width:1px;height:4px;background:#3e3e3e;"></div>
<div class="a" style="left:1575px;top:100px;width:1px;height:4px;background:#3e3e3e;"></div>
<div class="a" style="left:1572px;top:113px;width:3px;height:3px;background:#535353;border:1px solid #dcdcdc;width:5px;height:6px"></div>
<div class="a" style="left:1572px;top:121px;width:3px;height:3px;background:#535353;border:1px solid #dcdcdc;width:5px;height:6px"></div>
<div class="a" style="left:1572px;top:129px;width:5px;height:6px;background:#dcdcdc;"></div>
<div class="a" style="left:1562px;top:145px;width:16px;height:32px;background:#303030;border:1px solid #5e5e5e;border-radius:3px"></div>
<div class="a" style="left:1572px;top:151px;width:3px;height:20px;background:#e0e0e0;"></div>
<div class="a" style="left:1556px;top:180px;width:19px;height:2px;background:#3a3a3a;"></div>
<div class="a" style="left:1566px;top:186px;width:1px;height:4px;background:#3e3e3e;"></div>
<div class="a" style="left:1569px;top:186px;width:1px;height:4px;background:#3e3e3e;"></div>
<div class="a" style="left:1572px;top:186px;width:1px;height:4px;background:#3e3e3e;"></div>
<div class="a" style="left:1575px;top:186px;width:1px;height:4px;background:#3e3e3e;"></div>
<div class="a" style="left:1569px;top:200px;width:2px;height:3px;background:#dcdcdc;"></div>
<div class="a" style="left:1572px;top:200px;width:3px;height:3px;background:#dcdcdc;"></div>
<div class="a" style="left:1569px;top:205px;width:2px;height:3px;background:#dcdcdc;"></div>
<div class="a" style="left:1572px;top:205px;width:3px;height:3px;background:#dcdcdc;"></div>
<div class="a" style="left:1569px;top:210px;width:2px;height:3px;background:#dcdcdc;"></div>
<div class="a" style="left:1572px;top:210px;width:3px;height:3px;background:#dcdcdc;"></div>
<div class="a" style="left:1566px;top:232px;width:12px;height:9px;background:#dcdcdc;border-radius:9px 0 0 0"></div>
<div class="a" style="left:1569px;top:243px;width:6px;height:3px;background:#dcdcdc;"></div>
<div class="a" style="left:1556px;top:264px;width:19px;height:2px;background:#3a3a3a;"></div>
<div class="a" style="left:1566px;top:271px;width:1px;height:4px;background:#3e3e3e;"></div>
<div class="a" style="left:1569px;top:271px;width:1px;height:4px;background:#3e3e3e;"></div>
<div class="a" style="left:1572px;top:271px;width:1px;height:4px;background:#3e3e3e;"></div>
<div class="a" style="left:1575px;top:271px;width:1px;height:4px;background:#3e3e3e;"></div>
<div class="a" style="left:1569px;top:286px;width:2px;height:2.5px;background:#dcdcdc;"></div>
<div class="a" style="left:1572px;top:286px;width:3px;height:2.5px;background:#dcdcdc;"></div>
<div class="a" style="left:1569px;top:290px;width:2px;height:2.5px;background:#dcdcdc;"></div>
<div class="a" style="left:1572px;top:290px;width:3px;height:2.5px;background:#dcdcdc;"></div>
<div class="a" style="left:1569px;top:294px;width:2px;height:2.5px;background:#dcdcdc;"></div>
<div class="a" style="left:1572px;top:294px;width:3px;height:2.5px;background:#dcdcdc;"></div>
<div class="a" style="left:1556px;top:316px;width:19px;height:2px;background:#3a3a3a;"></div>
<div class="a" style="left:1566px;top:323px;width:1px;height:4px;background:#3e3e3e;"></div>
<div class="a" style="left:1569px;top:323px;width:1px;height:4px;background:#3e3e3e;"></div>
<div class="a" style="left:1572px;top:323px;width:1px;height:4px;background:#3e3e3e;"></div>
<div class="a" style="left:1575px;top:323px;width:1px;height:4px;background:#3e3e3e;"></div>
<div class="a" style="left:1571px;top:345px;border-left:5px solid transparent;border-bottom:9px solid #dcdcdc"></div>
<div class="a" style="left:1573px;top:374px;width:2px;height:7px;background:#dcdcdc;border-radius:2px 0 0 2px"></div>
<div class="a" style="left:1556px;top:402px;width:19px;height:2px;background:#3a3a3a;"></div>
<div class="a" style="left:1566px;top:409px;width:1px;height:4px;background:#3e3e3e;"></div>
<div class="a" style="left:1569px;top:409px;width:1px;height:4px;background:#3e3e3e;"></div>
<div class="a" style="left:1572px;top:409px;width:1px;height:4px;background:#3e3e3e;"></div>
<div class="a" style="left:1575px;top:409px;width:1px;height:4px;background:#3e3e3e;"></div>
<div class="a" style="left:1569px;top:423px;width:6px;height:3px;background:#dcdcdc;"></div>
<div class="a" style="left:1569px;top:429px;width:6px;height:3px;background:#dcdcdc;"></div>
<div class="a" style="left:1572px;top:426px;width:3px;height:3px;background:#dcdcdc;"></div>
<div class="a" style="left:1569px;top:436px;width:8px;height:9px;background:#dcdcdc;border-radius:8px 0 0 8px;transform:skewX(-20deg)"></div>
<div class="a" style="left:1556px;top:453px;width:19px;height:2px;background:#3a3a3a;"></div>
<div class="a" style="left:1566px;top:460px;width:1px;height:4px;background:#3e3e3e;"></div>
<div class="a" style="left:1569px;top:460px;width:1px;height:4px;background:#3e3e3e;"></div>
<div class="a" style="left:1572px;top:460px;width:1px;height:4px;background:#3e3e3e;"></div>
<div class="a" style="left:1575px;top:460px;width:1px;height:4px;background:#3e3e3e;"></div>
<div class="a" style="left:1569px;top:475px;width:8px;height:16px;border:1.5px solid #dcdcdc;border-radius:2px"></div>
<div class="a" style="left:1572px;top:478px;width:8px;height:16px;border:1.5px solid #dcdcdc;border-radius:2px"></div>
<div class="a" style="left:1556px;top:502px;width:19px;height:2px;background:#3a3a3a;"></div>
<div class="a" style="left:1295px;top:91px;width:260px;height:4px;background:#333333;"></div>
<div class="a" style="left:1295px;top:95px;width:260px;height:35px;background:#424242;"></div>
<div class="a" style="left:1295px;top:95px;width:1px;height:170px;background:#383838;"></div>
<div class="a" style="left:1381px;top:95px;width:55px;height:35px;background:#535353;"></div>
<div class="a" style="left:1380px;top:95px;width:1px;height:35px;background:#383838;"></div>
<div class="a" style="left:1436px;top:95px;width:1px;height:35px;background:#383838;"></div>
<div class="t" style="left:1307px;top:102px;font-size:15px;color:#a8a8a8;">历史记录</div>
<div class="t" style="left:1393px;top:102px;font-size:15px;color:#f0f0f0;">动作</div>
<svg style="left:1502px;top:106px" width="14" height="11"><path d="M1.5 1.5 L5.5 5.5 L1.5 9.5 M7.5 1.5 L11.5 5.5 L7.5 9.5" fill="none" stroke="#d8d8d8" stroke-width="1.5"/></svg>
<div class="a" style="left:1524px;top:105px;width:1px;height:14px;background:#bdbdbd;"></div>
<div class="a" style="left:1534px;top:107px;width:13px;height:1.5px;background:#c8c8c8;"></div>
<div class="a" style="left:1534px;top:110px;width:13px;height:1.5px;background:#c8c8c8;"></div>
<div class="a" style="left:1534px;top:113px;width:13px;height:1.5px;background:#c8c8c8;"></div>
<div class="a" style="left:1534px;top:116px;width:13px;height:1.5px;background:#c8c8c8;"></div>
<div class="a" style="left:1295px;top:130px;width:260px;height:95px;background:#535353;"></div>
<div class="a" style="left:1321px;top:130px;width:1px;height:95px;background:#484848;"></div>
<svg style="left:1303px;top:131px" width="14" height="12"><path d="M1.5 6 L5.5 10 L12.5 1.5" fill="none" stroke="#ededed" stroke-width="2.4"/></svg>
<div class="a" style="left:1328px;top:128px;width:17px;height:17px;border:1px solid #666"></div>
<svg style="left:1303px;top:156px" width="14" height="12"><path d="M1.5 6 L5.5 10 L12.5 1.5" fill="none" stroke="#ededed" stroke-width="2.4"/></svg>
<div class="a" style="left:1328px;top:153px;width:17px;height:17px;border:1px solid #666"></div>
<svg style="left:1303px;top:181px" width="14" height="12"><path d="M1.5 6 L5.5 10 L12.5 1.5" fill="none" stroke="#ededed" stroke-width="2.4"/></svg>
<div class="a" style="left:1328px;top:178px;width:17px;height:17px;border:1px solid #666"></div>
<svg style="left:1303px;top:206px" width="14" height="12"><path d="M1.5 6 L5.5 10 L12.5 1.5" fill="none" stroke="#ededed" stroke-width="2.4"/></svg>
<div class="a" style="left:1328px;top:203px;width:17px;height:17px;border:1px solid #666"></div>
<svg style="left:1355px;top:133px" width="12" height="8"><path d="M1 1 L6 6.5 L11 1" fill="none" stroke="#c8c8c8" stroke-width="1.3"/></svg>
<svg style="left:1375px;top:130px" width="20" height="16" viewBox="0 0 20 16"><path d="M1 0 V14 H19 V0" fill="none" stroke="#e6e6e6" stroke-width="1.6"/><rect x="1" y="6" width="18" height="8.5" fill="#e6e6e6"/></svg>
<div class="a" style="left:1406px;top:130px;width:40px;height:14px;overflow:hidden"><div class="t" style="left:0;top:-8px;font-size:15px;color:#e6e6e6">变亮</div></div>
<svg style="left:1375px;top:158px" width="12" height="8"><path d="M1 1 L6 6.5 L11 1" fill="none" stroke="#c8c8c8" stroke-width="1.3"/></svg>
<div class="t" style="left:1397px;top:151.5px;font-size:15px;color:#ededed;">light</div>
<div class="a" style="left:1391px;top:174px;width:143px;height:1px;background:#444;"></div>
<svg style="left:1397px;top:181px" width="8" height="14"><path d="M1.5 1 L6 7 L1.5 13" fill="none" stroke="#c8c8c8" stroke-width="1.3"/></svg>
<div class="t" style="left:1421px;top:176.5px;font-size:15px;color:#ededed;">选择 图层 “图...</div>
<div class="a" style="left:1411px;top:201px;width:123px;height:22px;background:#6b6b6b;"></div>
<svg style="left:1397px;top:206px" width="8" height="14"><path d="M1.5 1 L6 7 L1.5 13" fill="none" stroke="#c8c8c8" stroke-width="1.3"/></svg>
<div class="t" style="left:1421px;top:201.5px;font-size:15px;color:#f2f2f2;">亮度/对比度</div>
<div class="a" style="left:1534px;top:130px;width:20px;height:95px;background:#4a4a4a;"></div>
<svg style="left:1540px;top:142px" width="10" height="7"><path d="M1 6 L5 1.5 L9 6" fill="none" stroke="#7d7d7d" stroke-width="1.2"/></svg>
<div class="a" style="left:1537px;top:192px;width:14px;height:12px;background:#6a6a6a;"></div>
<svg style="left:1540px;top:208px" width="10" height="7"><path d="M1 1 L5 5.5 L9 1" fill="none" stroke="#7d7d7d" stroke-width="1.2"/></svg>
<div class="a" style="left:1295px;top:224px;width:260px;height:1px;background:#3c3c3c;"></div>
<div class="a" style="left:1295px;top:225px;width:260px;height:29px;background:#535353;"></div>
<div class="a" style="left:1323px;top:236px;width:10px;height:10px;background:#8a8a8a;"></div>
<div class="a" style="left:1357px;top:235px;width:12px;height:12px;border-radius:50%;background:#e2e2e2"></div>
<div class="a" style="left:1395px;top:235px;border-top:6px solid transparent;border-bottom:6px solid transparent;border-left:12px solid #e2e2e2"></div>
<svg style="left:1427px;top:234px" width="17" height="14"><path d="M0.5 2 H6 L7.5 3.5 H16 V13.5 H0.5 Z" fill="#e2e2e2"/></svg>
<svg style="left:1467px;top:234px" width="16" height="14"><path d="M1.5 1 H14 V12.5 H6.5 L1.5 7.5 Z M1.5 7.5 H6.5 V12.5" fill="none" stroke="#e2e2e2" stroke-width="1.6"/></svg>
<svg style="left:1505px;top:232px" width="16" height="18" viewBox="0 0 16 18"><path d="M1 4 H15 M5.5 3.5 V1.5 H10.5 V3.5" fill="none" stroke="#e2e2e2" stroke-width="1.6"/><path d="M2.5 5 V16.5 H13.5 V5" fill="none" stroke="#e2e2e2" stroke-width="1.6"/><path d="M6 7 V14.5 M8 7 V14.5 M10 7 V14.5" stroke="#e2e2e2" stroke-width="1.2"/></svg>
<div class="a" style="left:1295px;top:254px;width:260px;height:1px;background:#3c3c3c;"></div>
<div class="a" style="left:1295px;top:255px;width:260px;height:9px;background:#4d4d4d;"></div>
<div class="a" style="left:1413px;top:257px;width:1px;height:5px;background:#3e3e3e;"></div>
<div class="a" style="left:1416px;top:257px;width:1px;height:5px;background:#3e3e3e;"></div>
<div class="a" style="left:1419px;top:257px;width:1px;height:5px;background:#3e3e3e;"></div>
<div class="a" style="left:1422px;top:257px;width:1px;height:5px;background:#3e3e3e;"></div>
<div class="a" style="left:1425px;top:257px;width:1px;height:5px;background:#3e3e3e;"></div>
<div class="a" style="left:1428px;top:257px;width:1px;height:5px;background:#3e3e3e;"></div>
<div class="a" style="left:1431px;top:257px;width:1px;height:5px;background:#3e3e3e;"></div>
<div class="a" style="left:1434px;top:257px;width:1px;height:5px;background:#3e3e3e;"></div>
<div class="a" style="left:1295px;top:264px;width:260px;height:1px;background:#333;"></div>
<div class="a" style="left:1554px;top:91px;width:1px;height:174px;background:#383838;"></div>
<div class="a" style="left:0px;top:859px;width:1553px;height:21px;background:#4a4a4a;"></div>
<div class="a" style="left:0px;top:859px;width:1px;height:21px;background:#3a3a3a;"></div>
<div class="a" style="left:1px;top:859px;width:60px;height:21px;background:#4c4c4c;"></div>
<div class="a" style="left:61px;top:859px;width:1px;height:21px;background:#424242;"></div>
<div class="a" style="left:62px;top:859px;width:228px;height:21px;background:#545454;"></div>
<div class="a" style="left:1533px;top:859px;width:20px;height:21px;background:#505050;"></div>
<div class="t" style="left:17px;top:858.5px;font-size:13px;color:#e6e6e6;">50%</div>
<div class="t" style="left:110px;top:858.5px;font-size:13px;color:#dcdcdc;letter-spacing:0.45px">文档:5.49M/44.0M</div>
<svg style="left:277px;top:863px" width="7" height="13"><path d="M1.5 1 L5.5 6.5 L1.5 12" fill="none" stroke="#c8c8c8" stroke-width="1.2"/></svg>
<div class="a" style="left:0px;top:880px;width:1553px;height:3px;background:#323232;"></div>
<div class="a" style="left:0px;top:883px;width:1553px;height:35px;background:#424242;"></div>
<div class="a" style="left:0px;top:883px;width:1px;height:118px;background:#3a3a3a;"></div>
<div class="a" style="left:2px;top:883px;width:68px;height:35px;background:#4f4f4f;"></div>
<div class="t" style="left:13px;top:890px;font-size:15px;color:#e8e8e8;">时间轴</div>
<div class="a" style="left:1533px;top:895px;width:13px;height:1.5px;background:#c0c0c0;"></div>
<div class="a" style="left:1533px;top:898px;width:13px;height:1.5px;background:#c0c0c0;"></div>
<div class="a" style="left:1533px;top:901px;width:13px;height:1.5px;background:#c0c0c0;"></div>
<div class="a" style="left:1533px;top:904px;width:13px;height:1.5px;background:#c0c0c0;"></div>
<div class="a" style="left:2px;top:918px;width:1551px;height:77px;background:#4a4a4a;"></div>
<div class="a" style="left:2px;top:918px;width:459px;height:76px;background:#535353;"></div>
<div class="a" style="left:2px;top:994px;width:1551px;height:1px;background:#3e3e3e;"></div>
<div class="a" style="left:2px;top:995px;width:1551px;height:6px;background:#454545;"></div>
<div class="a" style="left:6px;top:995px;width:1522px;height:6px;background:#5a5a5a;"></div>
<div class="a" style="left:370px;top:995px;width:3px;height:6px;background:#454545;"></div>
<div class="a" style="left:56px;top:918px;width:2px;height:76px;background:#444444;"></div>
<div class="a" style="left:6px;top:925px;width:43px;height:44px;border:1px solid #646464"></div>
<div class="a" style="left:8px;top:928px;width:42px;height:42px;border:1px solid #646464;border-left:none;border-top:none"></div>
<svg style="left:8.5px;top:935px;overflow:hidden" width="40" height="28" viewBox="0 0 40 28"><rect width="40" height="28" fill="#000"/><path d="M0 7 L14 7 L14 0 L23 0 L19 6 L17 12 L19 17 L21 22 L25 28 L0 28 Z" fill="url(#spk)"/><path d="M24 0 L40 0 L40 11 L31 9 L25 13 L20 14 L17.5 12.3 L19 9 Z" fill="#2c2c2c"/><path d="M24 13.5 L30 9.5 L37 9 L34 12 L31 17 L27 18 L23.5 16 Z" fill="#222"/><path d="M18.5 20 L23 18 L28 21 L33 22 L36 18.5 L40 16 L40 28 L24.5 28 L20 23 Z" fill="#1b1b1b"/><path d="M34 0 L40 0 L40 28 L36 28 Z" fill="#000" opacity="0.75"/><path d="M19.5 12.8 L23.5 15.8 L27.5 18.7 L32 20.6 L34.6 17 L32.6 11.5" stroke="#f4f4f4" stroke-width="1.5" fill="none" stroke-dasharray="1 0.9"/><path d="M10.3 13.3 L13.5 13.8 L16.8 13.8" stroke="#ea1a62" stroke-width="1.6" fill="none"/></svg>
<div class="a" style="left:7px;top:926px;width:16px;height:14px;background:#535353;border-right:1px solid #646464;border-bottom:1px solid #646464"></div>
<div class="t" style="left:11px;top:924px;font-size:13.5px;color:#f4f4f4">1</div>
<div class="a" style="left:11.0px;top:979.8px;width:4.4px;height:4.4px;border-radius:50%;background:#808080"></div>
<div class="a" style="left:13.399999999999999px;top:984.6999999999999px;width:4.4px;height:4.4px;border-radius:50%;background:#989898"></div>
<div class="a" style="left:17.0px;top:979.8px;width:4.4px;height:4.4px;border-radius:50%;background:#b4b4b4"></div>
<div class="a" style="left:21.0px;top:974.8px;width:4.4px;height:4.4px;border-radius:50%;background:#dcdcdc"></div>
<div class="t" style="left:33.5px;top:975px;font-size:14px;color:#f4f4f4;letter-spacing:0.5px">1</div>
<svg style="left:43px;top:980px" width="11" height="7"><path d="M1 1 L5.5 5.5 L10 1" fill="none" stroke="#cccccc" stroke-width="1.2"/></svg>
<div class="a" style="left:114px;top:918px;width:2px;height:76px;background:#444444;"></div>
<div class="a" style="left:64px;top:925px;width:43px;height:44px;border:1px solid #646464"></div>
<div class="a" style="left:66px;top:928px;width:42px;height:42px;border:1px solid #646464;border-left:none;border-top:none"></div>
<svg style="left:66.5px;top:935px;overflow:hidden" width="40" height="28" viewBox="0 0 40 28"><rect width="40" height="28" fill="#000"/><path d="M0 7 L14 7 L14 0 L23 0 L19 6 L17 12 L19 17 L21 22 L25 28 L0 28 Z" fill="url(#spk)"/><path d="M24 0 L40 0 L40 11 L31 9 L25 13 L20 14 L17.5 12.3 L19 9 Z" fill="#2c2c2c"/><path d="M24 13.5 L30 9.5 L37 9 L34 12 L31 17 L27 18 L23.5 16 Z" fill="#222"/><path d="M18.5 20 L23 18 L28 21 L33 22 L36 18.5 L40 16 L40 28 L24.5 28 L20 23 Z" fill="#1b1b1b"/><path d="M34 0 L40 0 L40 28 L36 28 Z" fill="#000" opacity="0.75"/><path d="M19.5 12.8 L23.5 15.8 L27.5 18.7 L32 20.6 L34.6 17 L32.6 11.5" stroke="#f4f4f4" stroke-width="1.5" fill="none" stroke-dasharray="1 0.9"/><path d="M11 12.5 L16 14.5 L14 16" stroke="#000" stroke-width="1.8" fill="none"/><rect x="13.6" y="13.8" width="1.2" height="1.2" fill="#d01030"/></svg>
<div class="a" style="left:65px;top:926px;width:16px;height:14px;background:#535353;border-right:1px solid #646464;border-bottom:1px solid #646464"></div>
<div class="t" style="left:69px;top:924px;font-size:13.5px;color:#f4f4f4">2</div>
<div class="a" style="left:69.0px;top:979.8px;width:4.4px;height:4.4px;border-radius:50%;background:#808080"></div>
<div class="a" style="left:71.39999999999999px;top:984.6999999999999px;width:4.4px;height:4.4px;border-radius:50%;background:#989898"></div>
<div class="a" style="left:75.0px;top:979.8px;width:4.4px;height:4.4px;border-radius:50%;background:#b4b4b4"></div>
<div class="a" style="left:79.0px;top:974.8px;width:4.4px;height:4.4px;border-radius:50%;background:#dcdcdc"></div>
<div class="t" style="left:91.5px;top:975px;font-size:14px;color:#f4f4f4;letter-spacing:0.5px">1</div>
<svg style="left:101px;top:980px" width="11" height="7"><path d="M1 1 L5.5 5.5 L10 1" fill="none" stroke="#cccccc" stroke-width="1.2"/></svg>
<div class="a" style="left:171px;top:918px;width:2px;height:76px;background:#444444;"></div>
<div class="a" style="left:121px;top:925px;width:43px;height:44px;border:1px solid #646464"></div>
<div class="a" style="left:123px;top:928px;width:42px;height:42px;border:1px solid #646464;border-left:none;border-top:none"></div>
<svg style="left:123.5px;top:935px;overflow:hidden" width="40" height="28" viewBox="0 0 40 28"><rect width="40" height="28" fill="#000"/><path d="M0 7 L14 7 L14 0 L23 0 L19 6 L17 12 L19 17 L21 22 L25 28 L0 28 Z" fill="url(#spk)"/><path d="M24 0 L40 0 L40 11 L31 9 L25 13 L20 14 L17.5 12.3 L19 9 Z" fill="#5a5a5a"/><path d="M24 13.5 L30 9.5 L37 9 L34 12 L31 17 L27 18 L23.5 16 Z" fill="#4a4a4a"/><path d="M18.5 20 L23 18 L28 21 L33 22 L36 18.5 L40 16 L40 28 L24.5 28 L20 23 Z" fill="#3c3c3c"/><path d="M34 0 L40 0 L40 28 L36 28 Z" fill="#000" opacity="0.75"/><path d="M19.5 12.8 L23.5 15.8 L27.5 18.7 L32 20.6 L34.6 17 L32.6 11.5" stroke="#f4f4f4" stroke-width="1.5" fill="none" stroke-dasharray="1 0.9"/><path d="M11 12.5 L16 14.5 L14 16" stroke="#000" stroke-width="1.8" fill="none"/></svg>
<div class="a" style="left:122px;top:926px;width:16px;height:14px;background:#535353;border-right:1px solid #646464;border-bottom:1px solid #646464"></div>
<div class="t" style="left:126px;top:924px;font-size:13.5px;color:#f4f4f4">3</div>
<div class="a" style="left:125.99999999999999px;top:979.8px;width:4.4px;height:4.4px;border-radius:50%;background:#808080"></div>
<div class="a" style="left:128.4px;top:984.6999999999999px;width:4.4px;height:4.4px;border-radius:50%;background:#989898"></div>
<div class="a" style="left:132.0px;top:979.8px;width:4.4px;height:4.4px;border-radius:50%;background:#b4b4b4"></div>
<div class="a" style="left:136.0px;top:974.8px;width:4.4px;height:4.4px;border-radius:50%;background:#dcdcdc"></div>
<div class="t" style="left:144.5px;top:973px;font-size:14px;color:#f4f4f4;letter-spacing:0.5px">...</div>
<svg style="left:158px;top:980px" width="11" height="7"><path d="M1 1 L5.5 5.5 L10 1" fill="none" stroke="#cccccc" stroke-width="1.2"/></svg>
<div class="a" style="left:174px;top:918px;width:55px;height:76px;background:#696969;"></div>
<div class="a" style="left:228px;top:918px;width:2px;height:76px;background:#444444;"></div>
<div class="a" style="left:179px;top:925px;width:43px;height:44px;border:1px solid #787878"></div>
<div class="a" style="left:181px;top:928px;width:42px;height:42px;border:1px solid #787878;border-left:none;border-top:none"></div>
<svg style="left:181.5px;top:935px;overflow:hidden" width="40" height="28" viewBox="0 0 40 28"><rect width="40" height="28" fill="#000"/><path d="M0 7 L14 7 L14 0 L23 0 L19 6 L17 12 L19 17 L21 22 L25 28 L0 28 Z" fill="url(#spk)"/><path d="M24 0 L40 0 L40 11 L31 9 L25 13 L20 14 L17.5 12.3 L19 9 Z" fill="#2c2c2c"/><path d="M24 13.5 L30 9.5 L37 9 L34 12 L31 17 L27 18 L23.5 16 Z" fill="#222"/><path d="M18.5 20 L23 18 L28 21 L33 22 L36 18.5 L40 16 L40 28 L24.5 28 L20 23 Z" fill="#1b1b1b"/><path d="M34 0 L40 0 L40 28 L36 28 Z" fill="#000" opacity="0.75"/><path d="M19.5 12.8 L23.5 15.8 L27.5 18.7 L32 20.6 L34.6 17 L32.6 11.5" stroke="#f4f4f4" stroke-width="1.5" fill="none" stroke-dasharray="1 0.9"/><path d="M11 12.5 L16 14.5 L14 16" stroke="#000" stroke-width="1.8" fill="none"/></svg>
<div class="a" style="left:180px;top:926px;width:16px;height:14px;background:#696969;border-right:1px solid #787878;border-bottom:1px solid #787878"></div>
<div class="t" style="left:184px;top:924px;font-size:13.5px;color:#f4f4f4">4</div>
<div class="a" style="left:177px;top:923px;width:50px;height:50px;border:1.5px solid #f6f6f6"></div>
<div class="a" style="left:183.0px;top:979.8px;width:4.4px;height:4.4px;border-radius:50%;background:#808080"></div>
<div class="a" style="left:185.4px;top:984.6999999999999px;width:4.4px;height:4.4px;border-radius:50%;background:#989898"></div>
<div class="a" style="left:189.0px;top:979.8px;width:4.4px;height:4.4px;border-radius:50%;background:#b4b4b4"></div>
<div class="a" style="left:193.0px;top:974.8px;width:4.4px;height:4.4px;border-radius:50%;background:#dcdcdc"></div>
<div class="t" style="left:201.5px;top:973px;font-size:14px;color:#f4f4f4;letter-spacing:0.5px">...</div>
<svg style="left:215px;top:980px" width="11" height="7"><path d="M1 1 L5.5 5.5 L10 1" fill="none" stroke="#cccccc" stroke-width="1.2"/></svg>
<div class="a" style="left:286px;top:918px;width:2px;height:76px;background:#444444;"></div>
<div class="a" style="left:236px;top:925px;width:43px;height:44px;border:1px solid #646464"></div>
<div class="a" style="left:238px;top:928px;width:42px;height:42px;border:1px solid #646464;border-left:none;border-top:none"></div>
<svg style="left:238.5px;top:935px;overflow:hidden" width="40" height="28" viewBox="0 0 40 28"><rect width="40" height="28" fill="#000"/><path d="M0 7 L14 7 L14 0 L23 0 L19 6 L17 12 L19 17 L21 22 L25 28 L0 28 Z" fill="url(#spk)"/><path d="M24 0 L40 0 L40 11 L31 9 L25 13 L20 14 L17.5 12.3 L19 9 Z" fill="#5a5a5a"/><path d="M24 13.5 L30 9.5 L37 9 L34 12 L31 17 L27 18 L23.5 16 Z" fill="#4a4a4a"/><path d="M18.5 20 L23 18 L28 21 L33 22 L36 18.5 L40 16 L40 28 L24.5 28 L20 23 Z" fill="#3c3c3c"/><path d="M34 0 L40 0 L40 28 L36 28 Z" fill="#000" opacity="0.75"/><path d="M19.5 12.8 L23.5 15.8 L27.5 18.7 L32 20.6 L34.6 17 L32.6 11.5" stroke="#f4f4f4" stroke-width="1.5" fill="none" stroke-dasharray="1 0.9"/><path d="M11 12.5 L16 14.5 L14 16" stroke="#000" stroke-width="1.8" fill="none"/></svg>
<div class="a" style="left:237px;top:926px;width:16px;height:14px;background:#535353;border-right:1px solid #646464;border-bottom:1px solid #646464"></div>
<div class="t" style="left:241px;top:924px;font-size:13.5px;color:#f4f4f4">5</div>
<div class="a" style="left:241.0px;top:979.8px;width:4.4px;height:4.4px;border-radius:50%;background:#808080"></div>
<div class="a" style="left:243.4px;top:984.6999999999999px;width:4.4px;height:4.4px;border-radius:50%;background:#989898"></div>
<div class="a" style="left:247.0px;top:979.8px;width:4.4px;height:4.4px;border-radius:50%;background:#b4b4b4"></div>
<div class="a" style="left:251.0px;top:974.8px;width:4.4px;height:4.4px;border-radius:50%;background:#dcdcdc"></div>
<div class="t" style="left:259.5px;top:973px;font-size:14px;color:#f4f4f4;letter-spacing:0.5px">...</div>
<svg style="left:273px;top:980px" width="11" height="7"><path d="M1 1 L5.5 5.5 L10 1" fill="none" stroke="#cccccc" stroke-width="1.2"/></svg>
<div class="a" style="left:344px;top:918px;width:2px;height:76px;background:#444444;"></div>
<div class="a" style="left:294px;top:925px;width:43px;height:44px;border:1px solid #646464"></div>
<div class="a" style="left:296px;top:928px;width:42px;height:42px;border:1px solid #646464;border-left:none;border-top:none"></div>
<svg style="left:296.5px;top:935px;overflow:hidden" width="40" height="28" viewBox="0 0 40 28"><rect width="40" height="28" fill="#000"/><path d="M0 7 L14 7 L14 0 L23 0 L19 6 L17 12 L19 17 L21 22 L25 28 L0 28 Z" fill="url(#spk)"/><path d="M24 0 L40 0 L40 11 L31 9 L25 13 L20 14 L17.5 12.3 L19 9 Z" fill="#2c2c2c"/><path d="M24 13.5 L30 9.5 L37 9 L34 12 L31 17 L27 18 L23.5 16 Z" fill="#222"/><path d="M18.5 20 L23 18 L28 21 L33 22 L36 18.5 L40 16 L40 28 L24.5 28 L20 23 Z" fill="#1b1b1b"/><path d="M34 0 L40 0 L40 28 L36 28 Z" fill="#000" opacity="0.75"/><path d="M19.5 12.8 L23.5 15.8 L27.5 18.7 L32 20.6 L34.6 17 L32.6 11.5" stroke="#f4f4f4" stroke-width="1.5" fill="none" stroke-dasharray="1 0.9"/><path d="M11 12.5 L16 14.5 L14 16" stroke="#000" stroke-width="1.8" fill="none"/></svg>
<div class="a" style="left:295px;top:926px;width:16px;height:14px;background:#535353;border-right:1px solid #646464;border-bottom:1px solid #646464"></div>
<div class="t" style="left:299px;top:924px;font-size:13.5px;color:#f4f4f4">6</div>
<div class="a" style="left:299.0px;top:979.8px;width:4.4px;height:4.4px;border-radius:50%;background:#808080"></div>
<div class="a" style="left:301.40000000000003px;top:984.6999999999999px;width:4.4px;height:4.4px;border-radius:50%;background:#989898"></div>
<div class="a" style="left:305.0px;top:979.8px;width:4.4px;height:4.4px;border-radius:50%;background:#b4b4b4"></div>
<div class="a" style="left:309.0px;top:974.8px;width:4.4px;height:4.4px;border-radius:50%;background:#dcdcdc"></div>
<div class="t" style="left:317.5px;top:973px;font-size:14px;color:#f4f4f4;letter-spacing:0.5px">...</div>
<svg style="left:331px;top:980px" width="11" height="7"><path d="M1 1 L5.5 5.5 L10 1" fill="none" stroke="#cccccc" stroke-width="1.2"/></svg>
<div class="a" style="left:401px;top:918px;width:2px;height:76px;background:#444444;"></div>
<div class="a" style="left:351px;top:925px;width:43px;height:44px;border:1px solid #646464"></div>
<div class="a" style="left:353px;top:928px;width:42px;height:42px;border:1px solid #646464;border-left:none;border-top:none"></div>
<svg style="left:353.5px;top:935px;overflow:hidden" width="40" height="28" viewBox="0 0 40 28"><rect width="40" height="28" fill="#000"/><path d="M0 7 L14 7 L14 0 L23 0 L19 6 L17 12 L19 17 L21 22 L25 28 L0 28 Z" fill="url(#spk)"/><path d="M24 0 L40 0 L40 11 L31 9 L25 13 L20 14 L17.5 12.3 L19 9 Z" fill="#2c2c2c"/><path d="M24 13.5 L30 9.5 L37 9 L34 12 L31 17 L27 18 L23.5 16 Z" fill="#222"/><path d="M18.5 20 L23 18 L28 21 L33 22 L36 18.5 L40 16 L40 28 L24.5 28 L20 23 Z" fill="#1b1b1b"/><path d="M34 0 L40 0 L40 28 L36 28 Z" fill="#000" opacity="0.75"/><path d="M19.5 12.8 L23.5 15.8 L27.5 18.7 L32 20.6 L34.6 17 L32.6 11.5" stroke="#f4f4f4" stroke-width="1.5" fill="none" stroke-dasharray="1 0.9"/><path d="M11 12.5 L16 14.5 L14 16" stroke="#000" stroke-width="1.8" fill="none"/></svg>
<div class="a" style="left:352px;top:926px;width:16px;height:14px;background:#535353;border-right:1px solid #646464;border-bottom:1px solid #646464"></div>
<div class="t" style="left:356px;top:924px;font-size:13.5px;color:#f4f4f4">7</div>
<div class="a" style="left:356.0px;top:979.8px;width:4.4px;height:4.4px;border-radius:50%;background:#808080"></div>
<div class="a" style="left:358.40000000000003px;top:984.6999999999999px;width:4.4px;height:4.4px;border-radius:50%;background:#989898"></div>
<div class="a" style="left:362.0px;top:979.8px;width:4.4px;height:4.4px;border-radius:50%;background:#b4b4b4"></div>
<div class="a" style="left:366.0px;top:974.8px;width:4.4px;height:4.4px;border-radius:50%;background:#dcdcdc"></div>
<div class="t" style="left:374.5px;top:973px;font-size:14px;color:#f4f4f4;letter-spacing:0.5px">...</div>
<svg style="left:388px;top:980px" width="11" height="7"><path d="M1 1 L5.5 5.5 L10 1" fill="none" stroke="#cccccc" stroke-width="1.2"/></svg>
<div class="a" style="left:458px;top:918px;width:2px;height:76px;background:#444444;"></div>
<div class="a" style="left:409px;top:925px;width:43px;height:44px;border:1px solid #646464"></div>
<div class="a" style="left:411px;top:928px;width:42px;height:42px;border:1px solid #646464;border-left:none;border-top:none"></div>
<svg style="left:411.5px;top:935px;overflow:hidden" width="40" height="28" viewBox="0 0 40 28"><rect width="40" height="28" fill="#000"/><path d="M0 7 L14 7 L14 0 L23 0 L19 6 L17 12 L19 17 L21 22 L25 28 L0 28 Z" fill="url(#spk)"/><path d="M24 0 L40 0 L40 11 L31 9 L25 13 L20 14 L17.5 12.3 L19 9 Z" fill="#2c2c2c"/><path d="M24 13.5 L30 9.5 L37 9 L34 12 L31 17 L27 18 L23.5 16 Z" fill="#222"/><path d="M18.5 20 L23 18 L28 21 L33 22 L36 18.5 L40 16 L40 28 L24.5 28 L20 23 Z" fill="#1b1b1b"/><path d="M34 0 L40 0 L40 28 L36 28 Z" fill="#000" opacity="0.75"/><path d="M19.5 12.8 L23.5 15.8 L27.5 18.7 L32 20.6 L34.6 17 L32.6 11.5" stroke="#f4f4f4" stroke-width="1.5" fill="none" stroke-dasharray="1 0.9"/><path d="M11 12.5 L16 14.5 L14 16" stroke="#000" stroke-width="1.8" fill="none"/></svg>
<div class="a" style="left:410px;top:926px;width:16px;height:14px;background:#535353;border-right:1px solid #646464;border-bottom:1px solid #646464"></div>
<div class="t" style="left:414px;top:924px;font-size:13.5px;color:#f4f4f4">8</div>
<div class="a" style="left:413.0px;top:979.8px;width:4.4px;height:4.4px;border-radius:50%;background:#808080"></div>
<div class="a" style="left:415.40000000000003px;top:984.6999999999999px;width:4.4px;height:4.4px;border-radius:50%;background:#989898"></div>
<div class="a" style="left:419.0px;top:979.8px;width:4.4px;height:4.4px;border-radius:50%;background:#b4b4b4"></div>
<div class="a" style="left:423.0px;top:974.8px;width:4.4px;height:4.4px;border-radius:50%;background:#dcdcdc"></div>
<div class="t" style="left:431.5px;top:973px;font-size:14px;color:#f4f4f4;letter-spacing:0.5px">...</div>
<svg style="left:445px;top:980px" width="11" height="7"><path d="M1 1 L5.5 5.5 L10 1" fill="none" stroke="#cccccc" stroke-width="1.2"/></svg>
<div class="a" style="left:49px;top:28px;width:298px;height:784px;background:#f0f0f0;border:1px solid #b8b8b8;box-shadow:3px 3px 4px rgba(0,0,0,0.55)"></div>
<div class="mi" style="left:73px;top:33px;color:#000">新建(N)...</div>
<div class="mi sc" style="left:125.92px;width:200px;top:33px;color:#000;letter-spacing:0.92px">Ctrl+N</div>
<div class="mi" style="left:73px;top:59px;color:#000">打开(O)...</div>
<div class="mi sc" style="left:125.92px;width:200px;top:59px;color:#000;letter-spacing:0.92px">Ctrl+O</div>
<div class="mi" style="left:73px;top:85px;color:#000">在 Bridge 中浏览(B)...</div>
<div class="mi sc" style="left:125.92px;width:200px;top:85px;color:#000;letter-spacing:0.92px">Alt+Ctrl+O</div>
<div class="mi" style="left:73px;top:111px;color:#000">打开为...</div>
<div class="mi sc" style="left:125.92px;width:200px;top:111px;color:#000;letter-spacing:0.92px">Alt+Shift+Ctrl+O</div>
<div class="mi" style="left:73px;top:137.5px;color:#000">打开为智能对象...</div>
<div class="mi" style="left:73px;top:164px;color:#000">最近打开文件(T)</div>
<div class="arr" style="left:333px;top:166px;"></div>
<div class="sep" style="left:53px;top:191.5px;width:292px"></div>
<div class="mi" style="left:73px;top:200px;color:#000">关闭(C)</div>
<div class="mi sc" style="left:125.92px;width:200px;top:200px;color:#000;letter-spacing:0.92px">Ctrl+W</div>
<div class="mi" style="left:73px;top:226px;color:#000">关闭全部</div>
<div class="mi sc" style="left:125.92px;width:200px;top:226px;color:#000;letter-spacing:0.92px">Alt+Ctrl+W</div>
<div class="mi" style="left:73px;top:252px;color:#000">关闭并转到 Bridge...</div>
<div class="mi sc" style="left:125.92px;width:200px;top:252px;color:#000;letter-spacing:0.92px">Shift+Ctrl+W</div>
<div class="mi" style="left:73px;top:277.5px;color:#000">存储(S)</div>
<div class="mi sc" style="left:125.92px;width:200px;top:277.5px;color:#000;letter-spacing:0.92px">Ctrl+S</div>
<div class="mi" style="left:73px;top:304px;color:#000">存储为(A)...</div>
<div class="mi sc" style="left:125.92px;width:200px;top:304px;color:#000;letter-spacing:0.92px">Shift+Ctrl+S</div>
<div class="mi" style="left:73px;top:329.5px;color:#000">恢复(V)</div>
<div class="mi sc" style="left:125px;width:200px;top:329.5px;color:#000;letter-spacing:0px">F12</div>
<div class="sep" style="left:53px;top:359.5px;width:292px"></div>
<div class="mi" style="left:73px;top:369.5px;color:#000">导出(E)</div>
<div class="arr" style="left:333px;top:371.5px;"></div>
<div class="mi" style="left:73px;top:394.5px;color:#000">生成</div>
<div class="arr" style="left:333px;top:396.5px;"></div>
<div class="mi" style="left:73px;top:419px;color:#000">共享...</div>
<div class="mi" style="left:73px;top:445px;color:#000">在 Behance 上共享(D)...</div>
<div class="sep" style="left:53px;top:474px;width:292px"></div>
<div class="mi" style="left:73px;top:482.5px;color:#000">搜索 Adobe Stock...</div>
<div class="mi" style="left:73px;top:507.5px;color:#000">置入嵌入对象(L)...</div>
<div class="mi" style="left:73px;top:534px;color:#000">置入链接的智能对象(K)...</div>
<div class="mi" style="left:73px;top:560px;color:#8a8a8a">打包(G)...</div>
<div class="sep" style="left:53px;top:589.5px;width:292px"></div>
<div class="a" style="left:52px;top:595px;width:294px;height:26px;background:#0078d7;"></div>
<div class="mi" style="left:73px;top:599.5px;color:#fff">自动(U)</div>
<div class="arr" style="left:333px;top:601.5px;border-left-color:#fff"></div>
<div class="mi" style="left:73px;top:625px;color:#000">脚本(R)</div>
<div class="arr" style="left:333px;top:627px;"></div>
<div class="mi" style="left:73px;top:651px;color:#000">导入(M)</div>
<div class="arr" style="left:333px;top:653px;"></div>
<div class="sep" style="left:53px;top:678.5px;width:292px"></div>
<div class="mi" style="left:73px;top:685.5px;color:#000">文件简介(F)...</div>
<div class="mi sc" style="left:125.92px;width:200px;top:685.5px;color:#000;letter-spacing:0.92px">Alt+Shift+Ctrl+I</div>
<div class="sep" style="left:53px;top:715.5px;width:292px"></div>
<div class="mi" style="left:73px;top:722.5px;color:#000">打印(P)...</div>
<div class="mi sc" style="left:125.92px;width:200px;top:722.5px;color:#000;letter-spacing:0.92px">Ctrl+P</div>
<div class="mi" style="left:73px;top:748.5px;color:#000">打印一份(Y)</div>
<div class="mi sc" style="left:125.92px;width:200px;top:748.5px;color:#000;letter-spacing:0.92px">Alt+Shift+Ctrl+P</div>
<div class="sep" style="left:53px;top:778.5px;width:292px"></div>
<div class="mi" style="left:73px;top:785.5px;color:#000">退出(X)</div>
<div class="mi sc" style="left:125.92px;width:200px;top:785.5px;color:#000;letter-spacing:0.92px">Ctrl+Q</div>
<div class="a" style="left:342px;top:592px;width:181px;height:299px;background:#f0f0f0;border:1px solid #a8a8a8;box-shadow:3px 3px 4px rgba(0,0,0,0.55)"></div>
<div class="a" style="left:345px;top:595px;width:175px;height:25px;background:#0078d7;"></div>
<div class="mi" style="left:366px;top:597px;color:#fff">批处理(B)...</div>
<div class="mi" style="left:366px;top:622.5px;color:#000"><span style="letter-spacing:-0.35px">PDF 演示文稿(P)...</span></div>
<div class="mi" style="left:366px;top:648.5px;color:#000">创建快捷批处理(C)...</div>
<div class="sep" style="left:345px;top:678.5px;width:175px"></div>
<div class="mi" style="left:366px;top:686.5px;color:#8a8a8a">裁剪并拉直照片</div>
<div class="sep" style="left:345px;top:716px;width:175px"></div>
<div class="mi" style="left:366px;top:722.5px;color:#000">联系表 II...</div>
<div class="sep" style="left:345px;top:752px;width:175px"></div>
<div class="mi" style="left:366px;top:760px;color:#000"><span style="letter-spacing:0.8px">Photomerge...</span></div>
<div class="mi" style="left:366px;top:787px;color:#000"><span style="letter-spacing:-0.2px">合并到 HDR Pro...</span></div>
<div class="mi" style="left:366px;top:812px;color:#000">镜头校正...</div>
<div class="mi" style="left:366px;top:837.5px;color:#000">条件模式更改...</div>
<div class="mi" style="left:366px;top:863px;color:#000">限制图像...</div>
</body></html>
